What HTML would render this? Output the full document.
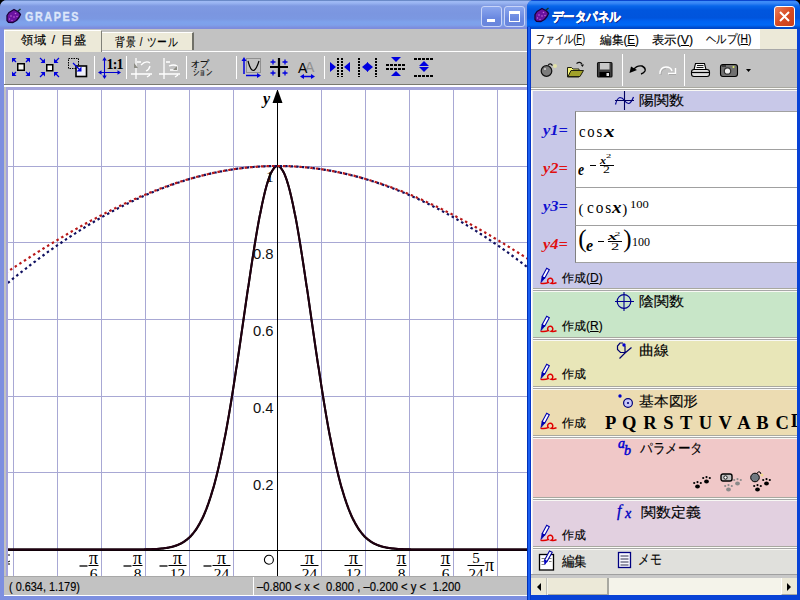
<!DOCTYPE html>
<html><head><meta charset="utf-8">
<style>
*{box-sizing:border-box}
body{margin:0;width:800px;height:600px;position:relative;overflow:hidden;background:#000;font-family:"Liberation Sans",sans-serif;font-size:12px;color:#000}
.a{position:absolute}
.sep{left:531px;width:266px;height:4px;background:linear-gradient(#a8a8a0 0,#a8a8a0 1px,#fcfcf8 1px,#fcfcf8 2px,#a8a8a8 2px,#a8a8a8 3px,#f8f8f4 3px)}
.pnl{left:531px;width:266px}
.ib{width:21px;height:21px;border:1px solid #c8d4f8;border-radius:3px;background:linear-gradient(#8aa6ee,#6a88e0 60%,#6a86dc)}
.box{left:575px;width:222px;height:38px;background:#fff;border-top:1px solid #a0a0a0;border-left:1px solid #808080}
.sf{font-family:"Liberation Serif",serif}
.jb{-webkit-text-stroke:0.15px #000}
</style></head><body>

<div class="a" style="left:0;top:0;width:560px;height:600px;background:#7d8fe0;border-radius:7px 7px 0 0"></div>
<div class="a" style="left:0;top:0;width:560px;height:29px;border-radius:7px 7px 0 0;background:linear-gradient(#6a8ac8 0,#6a8ac8 1px,#a0baf4 1px,#9ab5f2 3px,#7f9ae2 6px,#7b96e0 14px,#7b98e2 19px,#7ea2ec 22px,#7ea0ea 25px,#7d8cdc 28px)"></div>
<svg class="a" style="left:0;top:0" width="30" height="30" viewBox="0 0 30 30">
<path d="M14 9.5L18.5 12L20.5 14.5L19 17.5L16.5 20.5L13 22.5L8.5 22.3L7 20.5L7 15.5L9 12.5Z" fill="#6a12a0" stroke="#1a0038" stroke-width="1.3" stroke-linejoin="round"/>
<path d="M17.5 11.5L20.5 9" stroke="#103828" stroke-width="1.4"/>
<g fill="#c468d8"><circle cx="15.5" cy="13.5" r="0.8"/><circle cx="11" cy="16" r="0.8"/><circle cx="14" cy="17" r="0.8"/><circle cx="9.5" cy="19" r="0.7"/><circle cx="12" cy="20.5" r="0.7"/><circle cx="17" cy="16.5" r="0.7"/></g></svg>
<div id="tGRAPES" class="a" style="left:25.03px;top:9.00px;font-size:13px;white-space:nowrap;transform:scaleX(0.8228);transform-origin:0 0;font-weight:bold;color:#dce6fa;letter-spacing:2px;-webkit-text-stroke:0.4px #dce6fa">GRAPES</div>
<div class="a ib" style="left:481px;top:6px"><div class="a" style="left:5px;top:12px;width:8px;height:3px;background:#fff"></div></div>
<div class="a ib" style="left:504px;top:6px"><div class="a" style="left:4px;top:4px;width:11px;height:11px;border:1px solid #fff;border-top-width:3px"></div></div>
<div class="a" style="left:4px;top:29px;width:560px;height:567px;background:#c2c2c2"></div>
<div class="a" style="left:4px;top:51px;width:560px;height:1px;background:#fff"></div>
<div class="a" style="left:4px;top:30px;width:98px;height:22px;background:#ece9d8;border-top:1px solid #fff;border-left:1px solid #fff;border-right:1px solid #808078"></div>
<div class="a" style="left:102px;top:32px;width:92px;height:18px;background:#ece9d8;border-top:1px solid #fff;border-right:2px solid #707068"></div>
<div id="tTab1" class="a jb" style="left:21.00px;top:32.00px;font-size:12px;white-space:nowrap;transform:scaleX(1.0170);transform-origin:0 0;letter-spacing:1px">領域 / 目盛</div>
<div id="tTab2" class="a jb" style="left:115.18px;top:34.00px;font-size:12px;white-space:nowrap;transform:scaleX(0.8158);transform-origin:0 0;letter-spacing:1px">背景 / ツール</div>
<div class="a" style="left:4px;top:84px;width:560px;height:1px;background:#7a7a70"></div>
<div class="a" style="left:4px;top:85px;width:560px;height:2px;background:#fff"></div>
<div class="a" style="left:4px;top:52px;width:1px;height:32px;background:#fff"></div>
<svg class="a" style="left:0;top:52px" width="527" height="32" viewBox="0 52 527 32">
<defs>
<marker id="ah" viewBox="0 0 6 6" refX="5" refY="3" markerWidth="4" markerHeight="4" orient="auto"><path d="M0 0L6 3L0 6Z" fill="#0000e0"/></marker>
</defs>
<!-- icon1 expand -->
<rect x="17.75" y="63.75" width="6.5" height="6.5" fill="#f4f4f0" stroke="#000" stroke-width="1.5"/>
<g fill="#0000e0">
<path d="M12 58h4.5l-4.5 4.5z"/><path d="M30 58h-4.5l4.5 4.5z"/>
<path d="M12 76h4.5l-4.5-4.5z"/><path d="M30 76h-4.5l4.5-4.5z"/>
</g>
<path d="M13 59L16 62M29 59L26 62M13 75L16 72M29 75L26 72" stroke="#0000e0" stroke-width="1.4"/>
<!-- icon2 shrink -->
<rect x="46.75" y="64.75" width="6" height="6" fill="#f4f4f0" stroke="#000" stroke-width="1.5"/>
<g fill="#0000e0">
<path d="M45 63h-4.5l4.5-4.5z"/><path d="M54 63h4.5l-4.5-4.5z"/>
<path d="M45 72h-4.5l4.5 4.5z"/><path d="M54 72h4.5l-4.5 4.5z"/>
</g>
<path d="M40 58L43 61M59 58L56 61M40 77L43 74M59 77L56 74" stroke="#0000e0" stroke-width="1.2"/>
<!-- icon3 -->
<rect x="68.5" y="58.5" width="10" height="10" fill="none" stroke="#000" stroke-width="1" stroke-dasharray="1.5 1"/>
<rect x="76" y="66" width="10.5" height="10.5" fill="#f0f0f8" stroke="#000" stroke-width="1.6"/>
<path d="M73 63L79 69" stroke="#0000e0" stroke-width="1.2"/><path d="M81.5 71.5h-5l5-5z" fill="#0000e0"/>
<!-- sep -->
<rect x="94" y="56" width="1" height="23" fill="#fff"/>
<!-- icon4 1:1 -->
<path d="M104.5 59V77M100 72.5H119" stroke="#0000d0" stroke-width="1.1"/>
<path d="M102.3 60.5L104.5 57L106.7 60.5Z M102.3 75.5L104.5 79L106.7 75.5Z M117.5 70.3L121 72.5L117.5 74.7Z M101.5 70.3L98 72.5L101.5 74.7Z" fill="#0000d0"/>
<text x="106.5" y="68.5" font-family="Liberation Serif" font-weight="bold" font-size="14" letter-spacing="-0.8">1:1</text>
<!-- disabled icons -->
<g stroke="#fff" stroke-width="1.3" fill="none">
<path d="M136 58V79M131 74H152M137 62h4M141 65Q146 60 150 63M150 66Q149 70 146 71M150 75L147 77"/>
<path d="M164 58V79M159 74H180M166 62h4M169 66Q174 64 177 66V70H170M178 75L175 77"/>
</g>
<path d="M134 63v5h4z" fill="#8c8c84"/><path d="M177 66v4h-4z" fill="#8c8c84"/>
<rect x="126" y="56" width="1" height="23" fill="#fff"/>
<rect x="186" y="56" width="1" height="23" fill="#fff"/>
<rect x="236" y="56" width="1" height="23" fill="#fff"/>
<!-- icon11 parabola -->
<rect x="246.5" y="58.5" width="14" height="14" fill="none" stroke="#909090"/>
<path d="M248 61Q253 80 259 61" fill="none" stroke="#000" stroke-width="1.2"/>
<path d="M244 74V60" stroke="#0000e0" stroke-width="1.5"/><path d="M241.5 61L244 57L246.5 61Z" fill="#0000e0"/>
<path d="M246 75.5H258" stroke="#0000e0" stroke-width="1.5"/><path d="M257 73L261 75.5L257 78Z" fill="#0000e0"/>
<!-- icon12 grid -->
<path d="M279 58V77M270 67H288" stroke="#000" stroke-width="2.2"/>
<g stroke="#0000e0" stroke-width="1.3"><path d="M270.5 62h5M273 59.5v5M282.5 62h5M285 59.5v5M270.5 73h5M273 70.5v5M282.5 73h5M285 70.5v5"/></g>
<!-- icon13 A -->
<text x="305" y="72" font-family="Liberation Sans" font-size="14" fill="#909090">A</text>
<text x="298" y="73" font-family="Liberation Sans" font-size="14" fill="#000">A</text>
<path d="M303 76.5H312" stroke="#0000e0" stroke-width="1.5"/><path d="M304 74L300 76.5L304 79ZM311 74L315 76.5L311 79Z" fill="#0000e0"/>
<rect x="324" y="56" width="1" height="23" fill="#fff"/>
<!-- icon15 -->
<g fill="#0000e0"><path d="M330 62L336 67L330 72Z"/><path d="M350 62L344 67L350 72Z"/>
<path d="M368 62L362 67L368 72Z"/><path d="M367 62L373 67L367 72Z"/>
<path d="M391 57L401 57L396 62Z"/><path d="M391 76L401 76L396 71Z"/>
<path d="M419 66L429 66L424 61Z"/><path d="M419 67L429 67L424 72Z"/></g>
<g stroke="#000" stroke-width="2" stroke-dasharray="2 1"><path d="M338 58V77M342 58V77M359 58V77M376 58V77"/></g>
<g stroke="#000" stroke-width="2" stroke-dasharray="3 1"><path d="M386 65H406M386 69H406M414 59H434M414 76H434"/></g>
</svg>

<div id="tOp1" class="a jb" style="left:191.00px;top:58.00px;font-size:9px;white-space:nowrap;transform:scaleX(1.0000);transform-origin:0 0;">オプ</div>
<div id="tOp2" class="a jb" style="left:193.28px;top:66.00px;font-size:9px;white-space:nowrap;transform:scaleX(0.7200);transform-origin:0 0;">ション</div>
<div class="a" style="left:6px;top:87px;width:560px;height:489px;background:#fff;border-left:2px solid #a4a4dc;border-top:3px solid #a4a4dc"></div>
<svg class="a" style="left:0;top:0" width="560" height="600">
<defs><clipPath id="gc"><rect x="8" y="90" width="560" height="486"/></clipPath></defs>
<g clip-path="url(#gc)">
<g stroke="#a8a8d4" stroke-width="1"><line x1="13.5" y1="86" x2="13.5" y2="600"/><line x1="57.5" y1="86" x2="57.5" y2="600"/><line x1="101.5" y1="86" x2="101.5" y2="600"/><line x1="145.5" y1="86" x2="145.5" y2="600"/><line x1="189.5" y1="86" x2="189.5" y2="600"/><line x1="233.5" y1="86" x2="233.5" y2="600"/><line x1="321.5" y1="86" x2="321.5" y2="600"/><line x1="365.5" y1="86" x2="365.5" y2="600"/><line x1="409.5" y1="86" x2="409.5" y2="600"/><line x1="453.5" y1="86" x2="453.5" y2="600"/><line x1="497.5" y1="86" x2="497.5" y2="600"/><line x1="541.5" y1="86" x2="541.5" y2="600"/><line x1="0" y1="472.5" x2="560" y2="472.5"/><line x1="0" y1="396.5" x2="560" y2="396.5"/><line x1="0" y1="319.5" x2="560" y2="319.5"/><line x1="0" y1="242.5" x2="560" y2="242.5"/><line x1="0" y1="166.5" x2="560" y2="166.5"/><line x1="0" y1="89.5" x2="560" y2="89.5"/></g>
<path d="M277.5 90V600M0 550.5H560" stroke="#000" stroke-width="1"/>
<path d="M-4.9,549.5 L-4.5,549.5 L-4.1,549.5 L-3.7,549.5 L-3.3,549.5 L-2.9,549.5 L-2.5,549.5 L-2.1,549.5 L-1.7,549.5 L-1.3,549.5 L-0.9,549.5 L-0.5,549.5 L-0.1,549.5 L0.3,549.5 L0.7,549.5 L1.1,549.5 L1.5,549.5 L2.0,549.5 L2.4,549.5 L2.8,549.5 L3.2,549.5 L3.6,549.5 L4.0,549.5 L4.4,549.5 L4.8,549.5 L5.2,549.5 L5.6,549.5 L6.0,549.5 L6.4,549.5 L6.8,549.5 L7.2,549.5 L7.6,549.5 L8.0,549.5 L8.4,549.5 L8.8,549.5 L9.2,549.5 L9.6,549.5 L10.0,549.5 L10.4,549.5 L10.8,549.5 L11.2,549.5 L11.6,549.5 L12.0,549.5 L12.4,549.5 L12.8,549.5 L13.2,549.5 L13.7,549.5 L14.1,549.5 L14.5,549.5 L14.9,549.5 L15.3,549.5 L15.7,549.5 L16.1,549.5 L16.5,549.5 L16.9,549.5 L17.3,549.5 L17.7,549.5 L18.1,549.5 L18.5,549.5 L18.9,549.5 L19.3,549.5 L19.7,549.5 L20.1,549.5 L20.5,549.5 L20.9,549.5 L21.3,549.5 L21.7,549.5 L22.1,549.5 L22.5,549.5 L22.9,549.5 L23.3,549.5 L23.7,549.5 L24.1,549.5 L24.5,549.5 L24.9,549.5 L25.4,549.5 L25.8,549.5 L26.2,549.5 L26.6,549.5 L27.0,549.5 L27.4,549.5 L27.8,549.5 L28.2,549.5 L28.6,549.5 L29.0,549.5 L29.4,549.5 L29.8,549.5 L30.2,549.5 L30.6,549.5 L31.0,549.5 L31.4,549.5 L31.8,549.5 L32.2,549.5 L32.6,549.5 L33.0,549.5 L33.4,549.5 L33.8,549.5 L34.2,549.5 L34.6,549.5 L35.0,549.5 L35.4,549.5 L35.8,549.5 L36.2,549.5 L36.6,549.5 L37.0,549.5 L37.5,549.5 L37.9,549.5 L38.3,549.5 L38.7,549.5 L39.1,549.5 L39.5,549.5 L39.9,549.5 L40.3,549.5 L40.7,549.5 L41.1,549.5 L41.5,549.5 L41.9,549.5 L42.3,549.5 L42.7,549.5 L43.1,549.5 L43.5,549.5 L43.9,549.5 L44.3,549.5 L44.7,549.5 L45.1,549.5 L45.5,549.5 L45.9,549.5 L46.3,549.5 L46.7,549.5 L47.1,549.5 L47.5,549.5 L47.9,549.5 L48.3,549.5 L48.7,549.5 L49.2,549.5 L49.6,549.5 L50.0,549.5 L50.4,549.5 L50.8,549.5 L51.2,549.5 L51.6,549.5 L52.0,549.5 L52.4,549.5 L52.8,549.5 L53.2,549.5 L53.6,549.5 L54.0,549.5 L54.4,549.5 L54.8,549.5 L55.2,549.5 L55.6,549.5 L56.0,549.5 L56.4,549.5 L56.8,549.5 L57.2,549.5 L57.6,549.5 L58.0,549.5 L58.4,549.5 L58.8,549.5 L59.2,549.5 L59.6,549.5 L60.0,549.5 L60.4,549.5 L60.9,549.5 L61.3,549.5 L61.7,549.5 L62.1,549.5 L62.5,549.5 L62.9,549.5 L63.3,549.5 L63.7,549.5 L64.1,549.5 L64.5,549.5 L64.9,549.5 L65.3,549.5 L65.7,549.5 L66.1,549.5 L66.5,549.5 L66.9,549.5 L67.3,549.5 L67.7,549.5 L68.1,549.5 L68.5,549.5 L68.9,549.5 L69.3,549.5 L69.7,549.5 L70.1,549.5 L70.5,549.5 L70.9,549.5 L71.3,549.5 L71.7,549.5 L72.1,549.5 L72.6,549.5 L73.0,549.5 L73.4,549.5 L73.8,549.5 L74.2,549.5 L74.6,549.5 L75.0,549.5 L75.4,549.5 L75.8,549.5 L76.2,549.5 L76.6,549.5 L77.0,549.5 L77.4,549.5 L77.8,549.5 L78.2,549.5 L78.6,549.5 L79.0,549.5 L79.4,549.5 L79.8,549.5 L80.2,549.5 L80.6,549.5 L81.0,549.5 L81.4,549.5 L81.8,549.5 L82.2,549.5 L82.6,549.5 L83.0,549.5 L83.4,549.5 L83.8,549.5 L84.3,549.5 L84.7,549.5 L85.1,549.5 L85.5,549.5 L85.9,549.5 L86.3,549.5 L86.7,549.5 L87.1,549.5 L87.5,549.5 L87.9,549.5 L88.3,549.5 L88.7,549.5 L89.1,549.5 L89.5,549.5 L89.9,549.5 L90.3,549.5 L90.7,549.5 L91.1,549.5 L91.5,549.5 L91.9,549.5 L92.3,549.5 L92.7,549.5 L93.1,549.5 L93.5,549.5 L93.9,549.5 L94.3,549.5 L94.7,549.5 L95.1,549.5 L95.5,549.5 L96.0,549.5 L96.4,549.5 L96.8,549.5 L97.2,549.5 L97.6,549.5 L98.0,549.5 L98.4,549.5 L98.8,549.5 L99.2,549.5 L99.6,549.5 L100.0,549.5 L100.4,549.5 L100.8,549.5 L101.2,549.5 L101.6,549.5 L102.0,549.5 L102.4,549.5 L102.8,549.5 L103.2,549.5 L103.6,549.5 L104.0,549.5 L104.4,549.5 L104.8,549.5 L105.2,549.5 L105.6,549.5 L106.0,549.5 L106.4,549.5 L106.8,549.5 L107.2,549.5 L107.7,549.5 L108.1,549.5 L108.5,549.5 L108.9,549.5 L109.3,549.5 L109.7,549.5 L110.1,549.5 L110.5,549.5 L110.9,549.5 L111.3,549.5 L111.7,549.5 L112.1,549.5 L112.5,549.5 L112.9,549.5 L113.3,549.5 L113.7,549.5 L114.1,549.5 L114.5,549.5 L114.9,549.5 L115.3,549.5 L115.7,549.5 L116.1,549.5 L116.5,549.5 L116.9,549.5 L117.3,549.5 L117.7,549.5 L118.1,549.5 L118.5,549.5 L118.9,549.5 L119.4,549.5 L119.8,549.5 L120.2,549.5 L120.6,549.5 L121.0,549.5 L121.4,549.5 L121.8,549.5 L122.2,549.5 L122.6,549.5 L123.0,549.5 L123.4,549.5 L123.8,549.5 L124.2,549.5 L124.6,549.5 L125.0,549.5 L125.4,549.5 L125.8,549.5 L126.2,549.5 L126.6,549.5 L127.0,549.5 L127.4,549.5 L127.8,549.5 L128.2,549.5 L128.6,549.5 L129.0,549.5 L129.4,549.5 L129.8,549.5 L130.2,549.5 L130.6,549.5 L131.1,549.5 L131.5,549.5 L131.9,549.5 L132.3,549.5 L132.7,549.5 L133.1,549.5 L133.5,549.5 L133.9,549.5 L134.3,549.5 L134.7,549.5 L135.1,549.5 L135.5,549.5 L135.9,549.5 L136.3,549.5 L136.7,549.5 L137.1,549.5 L137.5,549.4 L137.9,549.4 L138.3,549.4 L138.7,549.4 L139.1,549.4 L139.5,549.4 L139.9,549.4 L140.3,549.4 L140.7,549.4 L141.1,549.4 L141.5,549.4 L141.9,549.4 L142.3,549.4 L142.8,549.4 L143.2,549.4 L143.6,549.4 L144.0,549.4 L144.4,549.4 L144.8,549.4 L145.2,549.4 L145.6,549.4 L146.0,549.4 L146.4,549.3 L146.8,549.3 L147.2,549.3 L147.6,549.3 L148.0,549.3 L148.4,549.3 L148.8,549.3 L149.2,549.3 L149.6,549.3 L150.0,549.3 L150.4,549.2 L150.8,549.2 L151.2,549.2 L151.6,549.2 L152.0,549.2 L152.4,549.2 L152.8,549.2 L153.2,549.1 L153.6,549.1 L154.0,549.1 L154.5,549.1 L154.9,549.1 L155.3,549.1 L155.7,549.0 L156.1,549.0 L156.5,549.0 L156.9,549.0 L157.3,548.9 L157.7,548.9 L158.1,548.9 L158.5,548.9 L158.9,548.8 L159.3,548.8 L159.7,548.8 L160.1,548.7 L160.5,548.7 L160.9,548.7 L161.3,548.6 L161.7,548.6 L162.1,548.6 L162.5,548.5 L162.9,548.5 L163.3,548.4 L163.7,548.4 L164.1,548.3 L164.5,548.3 L164.9,548.2 L165.3,548.2 L165.7,548.1 L166.2,548.1 L166.6,548.0 L167.0,547.9 L167.4,547.9 L167.8,547.8 L168.2,547.7 L168.6,547.7 L169.0,547.6 L169.4,547.5 L169.8,547.4 L170.2,547.3 L170.6,547.3 L171.0,547.2 L171.4,547.1 L171.8,547.0 L172.2,546.9 L172.6,546.8 L173.0,546.7 L173.4,546.6 L173.8,546.4 L174.2,546.3 L174.6,546.2 L175.0,546.1 L175.4,545.9 L175.8,545.8 L176.2,545.7 L176.6,545.5 L177.0,545.4 L177.4,545.2 L177.9,545.1 L178.3,544.9 L178.7,544.7 L179.1,544.5 L179.5,544.4 L179.9,544.2 L180.3,544.0 L180.7,543.8 L181.1,543.6 L181.5,543.4 L181.9,543.1 L182.3,542.9 L182.7,542.7 L183.1,542.4 L183.5,542.2 L183.9,541.9 L184.3,541.7 L184.7,541.4 L185.1,541.1 L185.5,540.8 L185.9,540.5 L186.3,540.2 L186.7,539.9 L187.1,539.6 L187.5,539.3 L187.9,538.9 L188.3,538.6 L188.7,538.2 L189.1,537.8 L189.6,537.5 L190.0,537.1 L190.4,536.7 L190.8,536.3 L191.2,535.8 L191.6,535.4 L192.0,534.9 L192.4,534.5 L192.8,534.0 L193.2,533.5 L193.6,533.0 L194.0,532.5 L194.4,532.0 L194.8,531.5 L195.2,530.9 L195.6,530.3 L196.0,529.8 L196.4,529.2 L196.8,528.6 L197.2,527.9 L197.6,527.3 L198.0,526.7 L198.4,526.0 L198.8,525.3 L199.2,524.6 L199.6,523.9 L200.0,523.2 L200.4,522.4 L200.8,521.6 L201.2,520.9 L201.7,520.1 L202.1,519.2 L202.5,518.4 L202.9,517.5 L203.3,516.7 L203.7,515.8 L204.1,514.9 L204.5,513.9 L204.9,513.0 L205.3,512.0 L205.7,511.0 L206.1,510.0 L206.5,509.0 L206.9,507.9 L207.3,506.8 L207.7,505.7 L208.1,504.6 L208.5,503.5 L208.9,502.3 L209.3,501.1 L209.7,499.9 L210.1,498.7 L210.5,497.5 L210.9,496.2 L211.3,494.9 L211.7,493.6 L212.1,492.2 L212.5,490.9 L212.9,489.5 L213.4,488.1 L213.8,486.6 L214.2,485.2 L214.6,483.7 L215.0,482.2 L215.4,480.6 L215.8,479.1 L216.2,477.5 L216.6,475.9 L217.0,474.3 L217.4,472.6 L217.8,470.9 L218.2,469.2 L218.6,467.5 L219.0,465.7 L219.4,464.0 L219.8,462.2 L220.2,460.3 L220.6,458.5 L221.0,456.6 L221.4,454.7 L221.8,452.8 L222.2,450.8 L222.6,448.8 L223.0,446.8 L223.4,444.8 L223.8,442.8 L224.2,440.7 L224.6,438.6 L225.1,436.5 L225.5,434.3 L225.9,432.2 L226.3,430.0 L226.7,427.8 L227.1,425.5 L227.5,423.3 L227.9,421.0 L228.3,418.7 L228.7,416.4 L229.1,414.0 L229.5,411.6 L229.9,409.2 L230.3,406.8 L230.7,404.4 L231.1,402.0 L231.5,399.5 L231.9,397.0 L232.3,394.5 L232.7,392.0 L233.1,389.4 L233.5,386.9 L233.9,384.3 L234.3,381.7 L234.7,379.1 L235.1,376.5 L235.5,373.8 L235.9,371.2 L236.3,368.5 L236.8,365.8 L237.2,363.2 L237.6,360.5 L238.0,357.7 L238.4,355.0 L238.8,352.3 L239.2,349.5 L239.6,346.8 L240.0,344.0 L240.4,341.3 L240.8,338.5 L241.2,335.7 L241.6,332.9 L242.0,330.1 L242.4,327.3 L242.8,324.5 L243.2,321.8 L243.6,319.0 L244.0,316.2 L244.4,313.4 L244.8,310.6 L245.2,307.8 L245.6,305.0 L246.0,302.2 L246.4,299.4 L246.8,296.6 L247.2,293.9 L247.6,291.1 L248.0,288.3 L248.5,285.6 L248.9,282.8 L249.3,280.1 L249.7,277.4 L250.1,274.7 L250.5,272.0 L250.9,269.3 L251.3,266.7 L251.7,264.0 L252.1,261.4 L252.5,258.8 L252.9,256.2 L253.3,253.6 L253.7,251.1 L254.1,248.6 L254.5,246.0 L254.9,243.6 L255.3,241.1 L255.7,238.7 L256.1,236.3 L256.5,233.9 L256.9,231.5 L257.3,229.2 L257.7,226.9 L258.1,224.7 L258.5,222.4 L258.9,220.2 L259.3,218.1 L259.7,215.9 L260.2,213.8 L260.6,211.8 L261.0,209.7 L261.4,207.7 L261.8,205.8 L262.2,203.9 L262.6,202.0 L263.0,200.2 L263.4,198.4 L263.8,196.6 L264.2,194.9 L264.6,193.3 L265.0,191.6 L265.4,190.1 L265.8,188.5 L266.2,187.1 L266.6,185.6 L267.0,184.2 L267.4,182.9 L267.8,181.6 L268.2,180.3 L268.6,179.1 L269.0,178.0 L269.4,176.9 L269.8,175.8 L270.2,174.8 L270.6,173.9 L271.0,173.0 L271.4,172.2 L271.9,171.4 L272.3,170.6 L272.7,170.0 L273.1,169.3 L273.5,168.8 L273.9,168.2 L274.3,167.8 L274.7,167.4 L275.1,167.0 L275.5,166.7 L275.9,166.4 L276.3,166.2 L276.7,166.1 L277.1,166.0 L277.5,166.0 L277.9,166.0 L278.3,166.1 L278.7,166.2 L279.1,166.4 L279.5,166.7 L279.9,167.0 L280.3,167.4 L280.7,167.8 L281.1,168.2 L281.5,168.8 L281.9,169.3 L282.3,170.0 L282.7,170.6 L283.1,171.4 L283.6,172.2 L284.0,173.0 L284.4,173.9 L284.8,174.8 L285.2,175.8 L285.6,176.9 L286.0,178.0 L286.4,179.1 L286.8,180.3 L287.2,181.6 L287.6,182.9 L288.0,184.2 L288.4,185.6 L288.8,187.1 L289.2,188.5 L289.6,190.1 L290.0,191.6 L290.4,193.3 L290.8,194.9 L291.2,196.6 L291.6,198.4 L292.0,200.2 L292.4,202.0 L292.8,203.9 L293.2,205.8 L293.6,207.7 L294.0,209.7 L294.4,211.8 L294.8,213.8 L295.3,215.9 L295.7,218.1 L296.1,220.2 L296.5,222.4 L296.9,224.7 L297.3,226.9 L297.7,229.2 L298.1,231.5 L298.5,233.9 L298.9,236.3 L299.3,238.7 L299.7,241.1 L300.1,243.6 L300.5,246.0 L300.9,248.6 L301.3,251.1 L301.7,253.6 L302.1,256.2 L302.5,258.8 L302.9,261.4 L303.3,264.0 L303.7,266.7 L304.1,269.3 L304.5,272.0 L304.9,274.7 L305.3,277.4 L305.7,280.1 L306.1,282.8 L306.5,285.6 L307.0,288.3 L307.4,291.1 L307.8,293.9 L308.2,296.6 L308.6,299.4 L309.0,302.2 L309.4,305.0 L309.8,307.8 L310.2,310.6 L310.6,313.4 L311.0,316.2 L311.4,319.0 L311.8,321.8 L312.2,324.5 L312.6,327.3 L313.0,330.1 L313.4,332.9 L313.8,335.7 L314.2,338.5 L314.6,341.3 L315.0,344.0 L315.4,346.8 L315.8,349.5 L316.2,352.3 L316.6,355.0 L317.0,357.7 L317.4,360.5 L317.8,363.2 L318.2,365.8 L318.7,368.5 L319.1,371.2 L319.5,373.8 L319.9,376.5 L320.3,379.1 L320.7,381.7 L321.1,384.3 L321.5,386.9 L321.9,389.4 L322.3,392.0 L322.7,394.5 L323.1,397.0 L323.5,399.5 L323.9,402.0 L324.3,404.4 L324.7,406.8 L325.1,409.2 L325.5,411.6 L325.9,414.0 L326.3,416.4 L326.7,418.7 L327.1,421.0 L327.5,423.3 L327.9,425.5 L328.3,427.8 L328.7,430.0 L329.1,432.2 L329.5,434.3 L329.9,436.5 L330.4,438.6 L330.8,440.7 L331.2,442.8 L331.6,444.8 L332.0,446.8 L332.4,448.8 L332.8,450.8 L333.2,452.8 L333.6,454.7 L334.0,456.6 L334.4,458.5 L334.8,460.3 L335.2,462.2 L335.6,464.0 L336.0,465.7 L336.4,467.5 L336.8,469.2 L337.2,470.9 L337.6,472.6 L338.0,474.3 L338.4,475.9 L338.8,477.5 L339.2,479.1 L339.6,480.6 L340.0,482.2 L340.4,483.7 L340.8,485.2 L341.2,486.6 L341.6,488.1 L342.1,489.5 L342.5,490.9 L342.9,492.2 L343.3,493.6 L343.7,494.9 L344.1,496.2 L344.5,497.5 L344.9,498.7 L345.3,499.9 L345.7,501.1 L346.1,502.3 L346.5,503.5 L346.9,504.6 L347.3,505.7 L347.7,506.8 L348.1,507.9 L348.5,509.0 L348.9,510.0 L349.3,511.0 L349.7,512.0 L350.1,513.0 L350.5,513.9 L350.9,514.9 L351.3,515.8 L351.7,516.7 L352.1,517.5 L352.5,518.4 L352.9,519.2 L353.3,520.1 L353.8,520.9 L354.2,521.6 L354.6,522.4 L355.0,523.2 L355.4,523.9 L355.8,524.6 L356.2,525.3 L356.6,526.0 L357.0,526.7 L357.4,527.3 L357.8,527.9 L358.2,528.6 L358.6,529.2 L359.0,529.8 L359.4,530.3 L359.8,530.9 L360.2,531.5 L360.6,532.0 L361.0,532.5 L361.4,533.0 L361.8,533.5 L362.2,534.0 L362.6,534.5 L363.0,534.9 L363.4,535.4 L363.8,535.8 L364.2,536.3 L364.6,536.7 L365.0,537.1 L365.4,537.5 L365.9,537.8 L366.3,538.2 L366.7,538.6 L367.1,538.9 L367.5,539.3 L367.9,539.6 L368.3,539.9 L368.7,540.2 L369.1,540.5 L369.5,540.8 L369.9,541.1 L370.3,541.4 L370.7,541.7 L371.1,541.9 L371.5,542.2 L371.9,542.4 L372.3,542.7 L372.7,542.9 L373.1,543.1 L373.5,543.4 L373.9,543.6 L374.3,543.8 L374.7,544.0 L375.1,544.2 L375.5,544.4 L375.9,544.5 L376.3,544.7 L376.7,544.9 L377.1,545.1 L377.6,545.2 L378.0,545.4 L378.4,545.5 L378.8,545.7 L379.2,545.8 L379.6,545.9 L380.0,546.1 L380.4,546.2 L380.8,546.3 L381.2,546.4 L381.6,546.6 L382.0,546.7 L382.4,546.8 L382.8,546.9 L383.2,547.0 L383.6,547.1 L384.0,547.2 L384.4,547.3 L384.8,547.3 L385.2,547.4 L385.6,547.5 L386.0,547.6 L386.4,547.7 L386.8,547.7 L387.2,547.8 L387.6,547.9 L388.0,547.9 L388.4,548.0 L388.8,548.1 L389.3,548.1 L389.7,548.2 L390.1,548.2 L390.5,548.3 L390.9,548.3 L391.3,548.4 L391.7,548.4 L392.1,548.5 L392.5,548.5 L392.9,548.6 L393.3,548.6 L393.7,548.6 L394.1,548.7 L394.5,548.7 L394.9,548.7 L395.3,548.8 L395.7,548.8 L396.1,548.8 L396.5,548.9 L396.9,548.9 L397.3,548.9 L397.7,548.9 L398.1,549.0 L398.5,549.0 L398.9,549.0 L399.3,549.0 L399.7,549.1 L400.1,549.1 L400.5,549.1 L401.0,549.1 L401.4,549.1 L401.8,549.1 L402.2,549.2 L402.6,549.2 L403.0,549.2 L403.4,549.2 L403.8,549.2 L404.2,549.2 L404.6,549.2 L405.0,549.3 L405.4,549.3 L405.8,549.3 L406.2,549.3 L406.6,549.3 L407.0,549.3 L407.4,549.3 L407.8,549.3 L408.2,549.3 L408.6,549.3 L409.0,549.4 L409.4,549.4 L409.8,549.4 L410.2,549.4 L410.6,549.4 L411.0,549.4 L411.4,549.4 L411.8,549.4 L412.2,549.4 L412.7,549.4 L413.1,549.4 L413.5,549.4 L413.9,549.4 L414.3,549.4 L414.7,549.4 L415.1,549.4 L415.5,549.4 L415.9,549.4 L416.3,549.4 L416.7,549.4 L417.1,549.4 L417.5,549.4 L417.9,549.5 L418.3,549.5 L418.7,549.5 L419.1,549.5 L419.5,549.5 L419.9,549.5 L420.3,549.5 L420.7,549.5 L421.1,549.5 L421.5,549.5 L421.9,549.5 L422.3,549.5 L422.7,549.5 L423.1,549.5 L423.5,549.5 L423.9,549.5 L424.4,549.5 L424.8,549.5 L425.2,549.5 L425.6,549.5 L426.0,549.5 L426.4,549.5 L426.8,549.5 L427.2,549.5 L427.6,549.5 L428.0,549.5 L428.4,549.5 L428.8,549.5 L429.2,549.5 L429.6,549.5 L430.0,549.5 L430.4,549.5 L430.8,549.5 L431.2,549.5 L431.6,549.5 L432.0,549.5 L432.4,549.5 L432.8,549.5 L433.2,549.5 L433.6,549.5 L434.0,549.5 L434.4,549.5 L434.8,549.5 L435.2,549.5 L435.6,549.5 L436.1,549.5 L436.5,549.5 L436.9,549.5 L437.3,549.5 L437.7,549.5 L438.1,549.5 L438.5,549.5 L438.9,549.5 L439.3,549.5 L439.7,549.5 L440.1,549.5 L440.5,549.5 L440.9,549.5 L441.3,549.5 L441.7,549.5 L442.1,549.5 L442.5,549.5 L442.9,549.5 L443.3,549.5 L443.7,549.5 L444.1,549.5 L444.5,549.5 L444.9,549.5 L445.3,549.5 L445.7,549.5 L446.1,549.5 L446.5,549.5 L446.9,549.5 L447.3,549.5 L447.8,549.5 L448.2,549.5 L448.6,549.5 L449.0,549.5 L449.4,549.5 L449.8,549.5 L450.2,549.5 L450.6,549.5 L451.0,549.5 L451.4,549.5 L451.8,549.5 L452.2,549.5 L452.6,549.5 L453.0,549.5 L453.4,549.5 L453.8,549.5 L454.2,549.5 L454.6,549.5 L455.0,549.5 L455.4,549.5 L455.8,549.5 L456.2,549.5 L456.6,549.5 L457.0,549.5 L457.4,549.5 L457.8,549.5 L458.2,549.5 L458.6,549.5 L459.0,549.5 L459.5,549.5 L459.9,549.5 L460.3,549.5 L460.7,549.5 L461.1,549.5 L461.5,549.5 L461.9,549.5 L462.3,549.5 L462.7,549.5 L463.1,549.5 L463.5,549.5 L463.9,549.5 L464.3,549.5 L464.7,549.5 L465.1,549.5 L465.5,549.5 L465.9,549.5 L466.3,549.5 L466.7,549.5 L467.1,549.5 L467.5,549.5 L467.9,549.5 L468.3,549.5 L468.7,549.5 L469.1,549.5 L469.5,549.5 L469.9,549.5 L470.3,549.5 L470.7,549.5 L471.2,549.5 L471.6,549.5 L472.0,549.5 L472.4,549.5 L472.8,549.5 L473.2,549.5 L473.6,549.5 L474.0,549.5 L474.4,549.5 L474.8,549.5 L475.2,549.5 L475.6,549.5 L476.0,549.5 L476.4,549.5 L476.8,549.5 L477.2,549.5 L477.6,549.5 L478.0,549.5 L478.4,549.5 L478.8,549.5 L479.2,549.5 L479.6,549.5 L480.0,549.5 L480.4,549.5 L480.8,549.5 L481.2,549.5 L481.6,549.5 L482.0,549.5 L482.4,549.5 L482.9,549.5 L483.3,549.5 L483.7,549.5 L484.1,549.5 L484.5,549.5 L484.9,549.5 L485.3,549.5 L485.7,549.5 L486.1,549.5 L486.5,549.5 L486.9,549.5 L487.3,549.5 L487.7,549.5 L488.1,549.5 L488.5,549.5 L488.9,549.5 L489.3,549.5 L489.7,549.5 L490.1,549.5 L490.5,549.5 L490.9,549.5 L491.3,549.5 L491.7,549.5 L492.1,549.5 L492.5,549.5 L492.9,549.5 L493.3,549.5 L493.7,549.5 L494.1,549.5 L494.6,549.5 L495.0,549.5 L495.4,549.5 L495.8,549.5 L496.2,549.5 L496.6,549.5 L497.0,549.5 L497.4,549.5 L497.8,549.5 L498.2,549.5 L498.6,549.5 L499.0,549.5 L499.4,549.5 L499.8,549.5 L500.2,549.5 L500.6,549.5 L501.0,549.5 L501.4,549.5 L501.8,549.5 L502.2,549.5 L502.6,549.5 L503.0,549.5 L503.4,549.5 L503.8,549.5 L504.2,549.5 L504.6,549.5 L505.0,549.5 L505.4,549.5 L505.8,549.5 L506.3,549.5 L506.7,549.5 L507.1,549.5 L507.5,549.5 L507.9,549.5 L508.3,549.5 L508.7,549.5 L509.1,549.5 L509.5,549.5 L509.9,549.5 L510.3,549.5 L510.7,549.5 L511.1,549.5 L511.5,549.5 L511.9,549.5 L512.3,549.5 L512.7,549.5 L513.1,549.5 L513.5,549.5 L513.9,549.5 L514.3,549.5 L514.7,549.5 L515.1,549.5 L515.5,549.5 L515.9,549.5 L516.3,549.5 L516.7,549.5 L517.1,549.5 L517.5,549.5 L518.0,549.5 L518.4,549.5 L518.8,549.5 L519.2,549.5 L519.6,549.5 L520.0,549.5 L520.4,549.5 L520.8,549.5 L521.2,549.5 L521.6,549.5 L522.0,549.5 L522.4,549.5 L522.8,549.5 L523.2,549.5 L523.6,549.5 L524.0,549.5 L524.4,549.5 L524.8,549.5 L525.2,549.5 L525.6,549.5 L526.0,549.5 L526.4,549.5 L526.8,549.5 L527.2,549.5 L527.6,549.5 L528.0,549.5 L528.4,549.5 L528.8,549.5 L529.2,549.5 L529.7,549.5 L530.1,549.5 L530.5,549.5 L530.9,549.5 L531.3,549.5 L531.7,549.5 L532.1,549.5 L532.5,549.5 L532.9,549.5 L533.3,549.5 L533.7,549.5 L534.1,549.5 L534.5,549.5 L534.9,549.5 L535.3,549.5 L535.7,549.5 L536.1,549.5 L536.5,549.5 L536.9,549.5 L537.3,549.5 L537.7,549.5 L538.1,549.5 L538.5,549.5 L538.9,549.5 L539.3,549.5 L539.7,549.5 L540.1,549.5 L540.5,549.5 L540.9,549.5 L541.3,549.5 L541.8,549.5 L542.2,549.5 L542.6,549.5 L543.0,549.5 L543.4,549.5 L543.8,549.5 L544.2,549.5 L544.6,549.5 L545.0,549.5 L545.4,549.5 L545.8,549.5 L546.2,549.5 L546.6,549.5 L547.0,549.5 L547.4,549.5 L547.8,549.5 L548.2,549.5 L548.6,549.5 L549.0,549.5 L549.4,549.5 L549.8,549.5 L550.2,549.5 L550.6,549.5 L551.0,549.5 L551.4,549.5 L551.8,549.5 L552.2,549.5 L552.6,549.5 L553.0,549.5 L553.5,549.5 L553.9,549.5 L554.3,549.5 L554.7,549.5 L555.1,549.5 L555.5,549.5 L555.9,549.5 L556.3,549.5 L556.7,549.5 L557.1,549.5 L557.5,549.5 L557.9,549.5 L558.3,549.5 L558.7,549.5 L559.1,549.5 L559.5,549.5 L559.9,549.5" fill="none" stroke="#000" stroke-width="2"/>
<path d="M-4.9,549.5 L-4.5,549.5 L-4.1,549.5 L-3.7,549.5 L-3.3,549.5 L-2.9,549.5 L-2.5,549.5 L-2.1,549.5 L-1.7,549.5 L-1.3,549.5 L-0.9,549.5 L-0.5,549.5 L-0.1,549.5 L0.3,549.5 L0.7,549.5 L1.1,549.5 L1.5,549.5 L2.0,549.5 L2.4,549.5 L2.8,549.5 L3.2,549.5 L3.6,549.5 L4.0,549.5 L4.4,549.5 L4.8,549.5 L5.2,549.5 L5.6,549.5 L6.0,549.5 L6.4,549.5 L6.8,549.5 L7.2,549.5 L7.6,549.5 L8.0,549.5 L8.4,549.5 L8.8,549.5 L9.2,549.5 L9.6,549.5 L10.0,549.5 L10.4,549.5 L10.8,549.5 L11.2,549.5 L11.6,549.5 L12.0,549.5 L12.4,549.5 L12.8,549.5 L13.2,549.5 L13.7,549.5 L14.1,549.5 L14.5,549.5 L14.9,549.5 L15.3,549.5 L15.7,549.5 L16.1,549.5 L16.5,549.5 L16.9,549.5 L17.3,549.5 L17.7,549.5 L18.1,549.5 L18.5,549.5 L18.9,549.5 L19.3,549.5 L19.7,549.5 L20.1,549.5 L20.5,549.5 L20.9,549.5 L21.3,549.5 L21.7,549.5 L22.1,549.5 L22.5,549.5 L22.9,549.5 L23.3,549.5 L23.7,549.5 L24.1,549.5 L24.5,549.5 L24.9,549.5 L25.4,549.5 L25.8,549.5 L26.2,549.5 L26.6,549.5 L27.0,549.5 L27.4,549.5 L27.8,549.5 L28.2,549.5 L28.6,549.5 L29.0,549.5 L29.4,549.5 L29.8,549.5 L30.2,549.5 L30.6,549.5 L31.0,549.5 L31.4,549.5 L31.8,549.5 L32.2,549.5 L32.6,549.5 L33.0,549.5 L33.4,549.5 L33.8,549.5 L34.2,549.5 L34.6,549.5 L35.0,549.5 L35.4,549.5 L35.8,549.5 L36.2,549.5 L36.6,549.5 L37.0,549.5 L37.5,549.5 L37.9,549.5 L38.3,549.5 L38.7,549.5 L39.1,549.5 L39.5,549.5 L39.9,549.5 L40.3,549.5 L40.7,549.5 L41.1,549.5 L41.5,549.5 L41.9,549.5 L42.3,549.5 L42.7,549.5 L43.1,549.5 L43.5,549.5 L43.9,549.5 L44.3,549.5 L44.7,549.5 L45.1,549.5 L45.5,549.5 L45.9,549.5 L46.3,549.5 L46.7,549.5 L47.1,549.5 L47.5,549.5 L47.9,549.5 L48.3,549.5 L48.7,549.5 L49.2,549.5 L49.6,549.5 L50.0,549.5 L50.4,549.5 L50.8,549.5 L51.2,549.5 L51.6,549.5 L52.0,549.5 L52.4,549.5 L52.8,549.5 L53.2,549.5 L53.6,549.5 L54.0,549.5 L54.4,549.5 L54.8,549.5 L55.2,549.5 L55.6,549.5 L56.0,549.5 L56.4,549.5 L56.8,549.5 L57.2,549.5 L57.6,549.5 L58.0,549.5 L58.4,549.5 L58.8,549.5 L59.2,549.5 L59.6,549.5 L60.0,549.5 L60.4,549.5 L60.9,549.5 L61.3,549.5 L61.7,549.5 L62.1,549.5 L62.5,549.5 L62.9,549.5 L63.3,549.5 L63.7,549.5 L64.1,549.5 L64.5,549.5 L64.9,549.5 L65.3,549.5 L65.7,549.5 L66.1,549.5 L66.5,549.5 L66.9,549.5 L67.3,549.5 L67.7,549.5 L68.1,549.5 L68.5,549.5 L68.9,549.5 L69.3,549.5 L69.7,549.5 L70.1,549.5 L70.5,549.5 L70.9,549.5 L71.3,549.5 L71.7,549.5 L72.1,549.5 L72.6,549.5 L73.0,549.5 L73.4,549.5 L73.8,549.5 L74.2,549.5 L74.6,549.5 L75.0,549.5 L75.4,549.5 L75.8,549.5 L76.2,549.5 L76.6,549.5 L77.0,549.5 L77.4,549.5 L77.8,549.5 L78.2,549.5 L78.6,549.5 L79.0,549.5 L79.4,549.5 L79.8,549.5 L80.2,549.5 L80.6,549.5 L81.0,549.5 L81.4,549.5 L81.8,549.5 L82.2,549.5 L82.6,549.5 L83.0,549.5 L83.4,549.5 L83.8,549.5 L84.3,549.5 L84.7,549.5 L85.1,549.5 L85.5,549.5 L85.9,549.5 L86.3,549.5 L86.7,549.5 L87.1,549.5 L87.5,549.5 L87.9,549.5 L88.3,549.5 L88.7,549.5 L89.1,549.5 L89.5,549.5 L89.9,549.5 L90.3,549.5 L90.7,549.5 L91.1,549.5 L91.5,549.5 L91.9,549.5 L92.3,549.5 L92.7,549.5 L93.1,549.5 L93.5,549.5 L93.9,549.5 L94.3,549.5 L94.7,549.5 L95.1,549.5 L95.5,549.5 L96.0,549.5 L96.4,549.5 L96.8,549.5 L97.2,549.5 L97.6,549.5 L98.0,549.5 L98.4,549.5 L98.8,549.5 L99.2,549.5 L99.6,549.5 L100.0,549.5 L100.4,549.5 L100.8,549.5 L101.2,549.5 L101.6,549.5 L102.0,549.5 L102.4,549.5 L102.8,549.5 L103.2,549.5 L103.6,549.5 L104.0,549.5 L104.4,549.5 L104.8,549.5 L105.2,549.5 L105.6,549.5 L106.0,549.5 L106.4,549.5 L106.8,549.5 L107.2,549.5 L107.7,549.5 L108.1,549.5 L108.5,549.5 L108.9,549.5 L109.3,549.5 L109.7,549.5 L110.1,549.5 L110.5,549.5 L110.9,549.5 L111.3,549.5 L111.7,549.5 L112.1,549.5 L112.5,549.5 L112.9,549.5 L113.3,549.5 L113.7,549.5 L114.1,549.5 L114.5,549.5 L114.9,549.5 L115.3,549.5 L115.7,549.5 L116.1,549.5 L116.5,549.5 L116.9,549.5 L117.3,549.5 L117.7,549.5 L118.1,549.5 L118.5,549.5 L118.9,549.5 L119.4,549.5 L119.8,549.5 L120.2,549.5 L120.6,549.5 L121.0,549.5 L121.4,549.5 L121.8,549.5 L122.2,549.5 L122.6,549.5 L123.0,549.5 L123.4,549.5 L123.8,549.5 L124.2,549.5 L124.6,549.5 L125.0,549.5 L125.4,549.5 L125.8,549.5 L126.2,549.5 L126.6,549.5 L127.0,549.5 L127.4,549.5 L127.8,549.5 L128.2,549.5 L128.6,549.5 L129.0,549.5 L129.4,549.5 L129.8,549.5 L130.2,549.5 L130.6,549.5 L131.1,549.5 L131.5,549.5 L131.9,549.5 L132.3,549.5 L132.7,549.5 L133.1,549.5 L133.5,549.5 L133.9,549.5 L134.3,549.5 L134.7,549.5 L135.1,549.5 L135.5,549.4 L135.9,549.4 L136.3,549.4 L136.7,549.4 L137.1,549.4 L137.5,549.4 L137.9,549.4 L138.3,549.4 L138.7,549.4 L139.1,549.4 L139.5,549.4 L139.9,549.4 L140.3,549.4 L140.7,549.4 L141.1,549.4 L141.5,549.4 L141.9,549.4 L142.3,549.4 L142.8,549.4 L143.2,549.4 L143.6,549.4 L144.0,549.4 L144.4,549.3 L144.8,549.3 L145.2,549.3 L145.6,549.3 L146.0,549.3 L146.4,549.3 L146.8,549.3 L147.2,549.3 L147.6,549.3 L148.0,549.3 L148.4,549.3 L148.8,549.2 L149.2,549.2 L149.6,549.2 L150.0,549.2 L150.4,549.2 L150.8,549.2 L151.2,549.2 L151.6,549.2 L152.0,549.1 L152.4,549.1 L152.8,549.1 L153.2,549.1 L153.6,549.1 L154.0,549.0 L154.5,549.0 L154.9,549.0 L155.3,549.0 L155.7,549.0 L156.1,548.9 L156.5,548.9 L156.9,548.9 L157.3,548.9 L157.7,548.8 L158.1,548.8 L158.5,548.8 L158.9,548.7 L159.3,548.7 L159.7,548.7 L160.1,548.6 L160.5,548.6 L160.9,548.6 L161.3,548.5 L161.7,548.5 L162.1,548.4 L162.5,548.4 L162.9,548.3 L163.3,548.3 L163.7,548.2 L164.1,548.2 L164.5,548.1 L164.9,548.1 L165.3,548.0 L165.7,548.0 L166.2,547.9 L166.6,547.8 L167.0,547.8 L167.4,547.7 L167.8,547.6 L168.2,547.6 L168.6,547.5 L169.0,547.4 L169.4,547.3 L169.8,547.2 L170.2,547.1 L170.6,547.1 L171.0,547.0 L171.4,546.9 L171.8,546.8 L172.2,546.7 L172.6,546.5 L173.0,546.4 L173.4,546.3 L173.8,546.2 L174.2,546.1 L174.6,545.9 L175.0,545.8 L175.4,545.7 L175.8,545.5 L176.2,545.4 L176.6,545.2 L177.0,545.1 L177.4,544.9 L177.9,544.8 L178.3,544.6 L178.7,544.4 L179.1,544.2 L179.5,544.0 L179.9,543.8 L180.3,543.6 L180.7,543.4 L181.1,543.2 L181.5,543.0 L181.9,542.8 L182.3,542.5 L182.7,542.3 L183.1,542.1 L183.5,541.8 L183.9,541.5 L184.3,541.3 L184.7,541.0 L185.1,540.7 L185.5,540.4 L185.9,540.1 L186.3,539.8 L186.7,539.5 L187.1,539.2 L187.5,538.8 L187.9,538.5 L188.3,538.1 L188.7,537.7 L189.1,537.4 L189.6,537.0 L190.0,536.6 L190.4,536.2 L190.8,535.7 L191.2,535.3 L191.6,534.9 L192.0,534.4 L192.4,534.0 L192.8,533.5 L193.2,533.0 L193.6,532.5 L194.0,532.0 L194.4,531.4 L194.8,530.9 L195.2,530.3 L195.6,529.8 L196.0,529.2 L196.4,528.6 L196.8,528.0 L197.2,527.3 L197.6,526.7 L198.0,526.0 L198.4,525.4 L198.8,524.7 L199.2,524.0 L199.6,523.3 L200.0,522.5 L200.4,521.8 L200.8,521.0 L201.2,520.2 L201.7,519.4 L202.1,518.6 L202.5,517.7 L202.9,516.9 L203.3,516.0 L203.7,515.1 L204.1,514.2 L204.5,513.2 L204.9,512.3 L205.3,511.3 L205.7,510.3 L206.1,509.3 L206.5,508.3 L206.9,507.2 L207.3,506.1 L207.7,505.0 L208.1,503.9 L208.5,502.8 L208.9,501.6 L209.3,500.4 L209.7,499.2 L210.1,498.0 L210.5,496.8 L210.9,495.5 L211.3,494.2 L211.7,492.9 L212.1,491.5 L212.5,490.2 L212.9,488.8 L213.4,487.4 L213.8,485.9 L214.2,484.5 L214.6,483.0 L215.0,481.5 L215.4,480.0 L215.8,478.4 L216.2,476.8 L216.6,475.2 L217.0,473.6 L217.4,472.0 L217.8,470.3 L218.2,468.6 L218.6,466.9 L219.0,465.1 L219.4,463.3 L219.8,461.5 L220.2,459.7 L220.6,457.9 L221.0,456.0 L221.4,454.1 L221.8,452.2 L222.2,450.2 L222.6,448.2 L223.0,446.3 L223.4,444.2 L223.8,442.2 L224.2,440.1 L224.6,438.0 L225.1,435.9 L225.5,433.8 L225.9,431.6 L226.3,429.4 L226.7,427.2 L227.1,425.0 L227.5,422.7 L227.9,420.5 L228.3,418.2 L228.7,415.9 L229.1,413.5 L229.5,411.2 L229.9,408.8 L230.3,406.4 L230.7,404.0 L231.1,401.5 L231.5,399.1 L231.9,396.6 L232.3,394.1 L232.7,391.6 L233.1,389.0 L233.5,386.5 L233.9,383.9 L234.3,381.3 L234.7,378.7 L235.1,376.1 L235.5,373.5 L235.9,370.8 L236.3,368.2 L236.8,365.5 L237.2,362.8 L237.6,360.1 L238.0,357.4 L238.4,354.7 L238.8,352.0 L239.2,349.3 L239.6,346.5 L240.0,343.8 L240.4,341.0 L240.8,338.2 L241.2,335.5 L241.6,332.7 L242.0,329.9 L242.4,327.1 L242.8,324.3 L243.2,321.5 L243.6,318.8 L244.0,316.0 L244.4,313.2 L244.8,310.4 L245.2,307.6 L245.6,304.8 L246.0,302.0 L246.4,299.3 L246.8,296.5 L247.2,293.7 L247.6,291.0 L248.0,288.2 L248.5,285.5 L248.9,282.7 L249.3,280.0 L249.7,277.3 L250.1,274.6 L250.5,271.9 L250.9,269.2 L251.3,266.6 L251.7,263.9 L252.1,261.3 L252.5,258.7 L252.9,256.1 L253.3,253.6 L253.7,251.0 L254.1,248.5 L254.5,246.0 L254.9,243.5 L255.3,241.1 L255.7,238.6 L256.1,236.2 L256.5,233.8 L256.9,231.5 L257.3,229.2 L257.7,226.9 L258.1,224.6 L258.5,222.4 L258.9,220.2 L259.3,218.0 L259.7,215.9 L260.2,213.8 L260.6,211.7 L261.0,209.7 L261.4,207.7 L261.8,205.8 L262.2,203.9 L262.6,202.0 L263.0,200.2 L263.4,198.4 L263.8,196.6 L264.2,194.9 L264.6,193.3 L265.0,191.6 L265.4,190.1 L265.8,188.5 L266.2,187.0 L266.6,185.6 L267.0,184.2 L267.4,182.9 L267.8,181.6 L268.2,180.3 L268.6,179.1 L269.0,178.0 L269.4,176.9 L269.8,175.8 L270.2,174.8 L270.6,173.9 L271.0,173.0 L271.4,172.2 L271.9,171.4 L272.3,170.6 L272.7,170.0 L273.1,169.3 L273.5,168.8 L273.9,168.2 L274.3,167.8 L274.7,167.4 L275.1,167.0 L275.5,166.7 L275.9,166.4 L276.3,166.2 L276.7,166.1 L277.1,166.0 L277.5,166.0 L277.9,166.0 L278.3,166.1 L278.7,166.2 L279.1,166.4 L279.5,166.7 L279.9,167.0 L280.3,167.4 L280.7,167.8 L281.1,168.2 L281.5,168.8 L281.9,169.3 L282.3,170.0 L282.7,170.6 L283.1,171.4 L283.6,172.2 L284.0,173.0 L284.4,173.9 L284.8,174.8 L285.2,175.8 L285.6,176.9 L286.0,178.0 L286.4,179.1 L286.8,180.3 L287.2,181.6 L287.6,182.9 L288.0,184.2 L288.4,185.6 L288.8,187.0 L289.2,188.5 L289.6,190.1 L290.0,191.6 L290.4,193.3 L290.8,194.9 L291.2,196.6 L291.6,198.4 L292.0,200.2 L292.4,202.0 L292.8,203.9 L293.2,205.8 L293.6,207.7 L294.0,209.7 L294.4,211.7 L294.8,213.8 L295.3,215.9 L295.7,218.0 L296.1,220.2 L296.5,222.4 L296.9,224.6 L297.3,226.9 L297.7,229.2 L298.1,231.5 L298.5,233.8 L298.9,236.2 L299.3,238.6 L299.7,241.1 L300.1,243.5 L300.5,246.0 L300.9,248.5 L301.3,251.0 L301.7,253.6 L302.1,256.1 L302.5,258.7 L302.9,261.3 L303.3,263.9 L303.7,266.6 L304.1,269.2 L304.5,271.9 L304.9,274.6 L305.3,277.3 L305.7,280.0 L306.1,282.7 L306.5,285.5 L307.0,288.2 L307.4,291.0 L307.8,293.7 L308.2,296.5 L308.6,299.3 L309.0,302.0 L309.4,304.8 L309.8,307.6 L310.2,310.4 L310.6,313.2 L311.0,316.0 L311.4,318.8 L311.8,321.5 L312.2,324.3 L312.6,327.1 L313.0,329.9 L313.4,332.7 L313.8,335.5 L314.2,338.2 L314.6,341.0 L315.0,343.8 L315.4,346.5 L315.8,349.3 L316.2,352.0 L316.6,354.7 L317.0,357.4 L317.4,360.1 L317.8,362.8 L318.2,365.5 L318.7,368.2 L319.1,370.8 L319.5,373.5 L319.9,376.1 L320.3,378.7 L320.7,381.3 L321.1,383.9 L321.5,386.5 L321.9,389.0 L322.3,391.6 L322.7,394.1 L323.1,396.6 L323.5,399.1 L323.9,401.5 L324.3,404.0 L324.7,406.4 L325.1,408.8 L325.5,411.2 L325.9,413.5 L326.3,415.9 L326.7,418.2 L327.1,420.5 L327.5,422.7 L327.9,425.0 L328.3,427.2 L328.7,429.4 L329.1,431.6 L329.5,433.8 L329.9,435.9 L330.4,438.0 L330.8,440.1 L331.2,442.2 L331.6,444.2 L332.0,446.3 L332.4,448.2 L332.8,450.2 L333.2,452.2 L333.6,454.1 L334.0,456.0 L334.4,457.9 L334.8,459.7 L335.2,461.5 L335.6,463.3 L336.0,465.1 L336.4,466.9 L336.8,468.6 L337.2,470.3 L337.6,472.0 L338.0,473.6 L338.4,475.2 L338.8,476.8 L339.2,478.4 L339.6,480.0 L340.0,481.5 L340.4,483.0 L340.8,484.5 L341.2,485.9 L341.6,487.4 L342.1,488.8 L342.5,490.2 L342.9,491.5 L343.3,492.9 L343.7,494.2 L344.1,495.5 L344.5,496.8 L344.9,498.0 L345.3,499.2 L345.7,500.4 L346.1,501.6 L346.5,502.8 L346.9,503.9 L347.3,505.0 L347.7,506.1 L348.1,507.2 L348.5,508.3 L348.9,509.3 L349.3,510.3 L349.7,511.3 L350.1,512.3 L350.5,513.2 L350.9,514.2 L351.3,515.1 L351.7,516.0 L352.1,516.9 L352.5,517.7 L352.9,518.6 L353.3,519.4 L353.8,520.2 L354.2,521.0 L354.6,521.8 L355.0,522.5 L355.4,523.3 L355.8,524.0 L356.2,524.7 L356.6,525.4 L357.0,526.0 L357.4,526.7 L357.8,527.3 L358.2,528.0 L358.6,528.6 L359.0,529.2 L359.4,529.8 L359.8,530.3 L360.2,530.9 L360.6,531.4 L361.0,532.0 L361.4,532.5 L361.8,533.0 L362.2,533.5 L362.6,534.0 L363.0,534.4 L363.4,534.9 L363.8,535.3 L364.2,535.7 L364.6,536.2 L365.0,536.6 L365.4,537.0 L365.9,537.4 L366.3,537.7 L366.7,538.1 L367.1,538.5 L367.5,538.8 L367.9,539.2 L368.3,539.5 L368.7,539.8 L369.1,540.1 L369.5,540.4 L369.9,540.7 L370.3,541.0 L370.7,541.3 L371.1,541.5 L371.5,541.8 L371.9,542.1 L372.3,542.3 L372.7,542.5 L373.1,542.8 L373.5,543.0 L373.9,543.2 L374.3,543.4 L374.7,543.6 L375.1,543.8 L375.5,544.0 L375.9,544.2 L376.3,544.4 L376.7,544.6 L377.1,544.8 L377.6,544.9 L378.0,545.1 L378.4,545.2 L378.8,545.4 L379.2,545.5 L379.6,545.7 L380.0,545.8 L380.4,545.9 L380.8,546.1 L381.2,546.2 L381.6,546.3 L382.0,546.4 L382.4,546.5 L382.8,546.7 L383.2,546.8 L383.6,546.9 L384.0,547.0 L384.4,547.1 L384.8,547.1 L385.2,547.2 L385.6,547.3 L386.0,547.4 L386.4,547.5 L386.8,547.6 L387.2,547.6 L387.6,547.7 L388.0,547.8 L388.4,547.8 L388.8,547.9 L389.3,548.0 L389.7,548.0 L390.1,548.1 L390.5,548.1 L390.9,548.2 L391.3,548.2 L391.7,548.3 L392.1,548.3 L392.5,548.4 L392.9,548.4 L393.3,548.5 L393.7,548.5 L394.1,548.6 L394.5,548.6 L394.9,548.6 L395.3,548.7 L395.7,548.7 L396.1,548.7 L396.5,548.8 L396.9,548.8 L397.3,548.8 L397.7,548.9 L398.1,548.9 L398.5,548.9 L398.9,548.9 L399.3,549.0 L399.7,549.0 L400.1,549.0 L400.5,549.0 L401.0,549.0 L401.4,549.1 L401.8,549.1 L402.2,549.1 L402.6,549.1 L403.0,549.1 L403.4,549.2 L403.8,549.2 L404.2,549.2 L404.6,549.2 L405.0,549.2 L405.4,549.2 L405.8,549.2 L406.2,549.2 L406.6,549.3 L407.0,549.3 L407.4,549.3 L407.8,549.3 L408.2,549.3 L408.6,549.3 L409.0,549.3 L409.4,549.3 L409.8,549.3 L410.2,549.3 L410.6,549.3 L411.0,549.4 L411.4,549.4 L411.8,549.4 L412.2,549.4 L412.7,549.4 L413.1,549.4 L413.5,549.4 L413.9,549.4 L414.3,549.4 L414.7,549.4 L415.1,549.4 L415.5,549.4 L415.9,549.4 L416.3,549.4 L416.7,549.4 L417.1,549.4 L417.5,549.4 L417.9,549.4 L418.3,549.4 L418.7,549.4 L419.1,549.4 L419.5,549.4 L419.9,549.5 L420.3,549.5 L420.7,549.5 L421.1,549.5 L421.5,549.5 L421.9,549.5 L422.3,549.5 L422.7,549.5 L423.1,549.5 L423.5,549.5 L423.9,549.5 L424.4,549.5 L424.8,549.5 L425.2,549.5 L425.6,549.5 L426.0,549.5 L426.4,549.5 L426.8,549.5 L427.2,549.5 L427.6,549.5 L428.0,549.5 L428.4,549.5 L428.8,549.5 L429.2,549.5 L429.6,549.5 L430.0,549.5 L430.4,549.5 L430.8,549.5 L431.2,549.5 L431.6,549.5 L432.0,549.5 L432.4,549.5 L432.8,549.5 L433.2,549.5 L433.6,549.5 L434.0,549.5 L434.4,549.5 L434.8,549.5 L435.2,549.5 L435.6,549.5 L436.1,549.5 L436.5,549.5 L436.9,549.5 L437.3,549.5 L437.7,549.5 L438.1,549.5 L438.5,549.5 L438.9,549.5 L439.3,549.5 L439.7,549.5 L440.1,549.5 L440.5,549.5 L440.9,549.5 L441.3,549.5 L441.7,549.5 L442.1,549.5 L442.5,549.5 L442.9,549.5 L443.3,549.5 L443.7,549.5 L444.1,549.5 L444.5,549.5 L444.9,549.5 L445.3,549.5 L445.7,549.5 L446.1,549.5 L446.5,549.5 L446.9,549.5 L447.3,549.5 L447.8,549.5 L448.2,549.5 L448.6,549.5 L449.0,549.5 L449.4,549.5 L449.8,549.5 L450.2,549.5 L450.6,549.5 L451.0,549.5 L451.4,549.5 L451.8,549.5 L452.2,549.5 L452.6,549.5 L453.0,549.5 L453.4,549.5 L453.8,549.5 L454.2,549.5 L454.6,549.5 L455.0,549.5 L455.4,549.5 L455.8,549.5 L456.2,549.5 L456.6,549.5 L457.0,549.5 L457.4,549.5 L457.8,549.5 L458.2,549.5 L458.6,549.5 L459.0,549.5 L459.5,549.5 L459.9,549.5 L460.3,549.5 L460.7,549.5 L461.1,549.5 L461.5,549.5 L461.9,549.5 L462.3,549.5 L462.7,549.5 L463.1,549.5 L463.5,549.5 L463.9,549.5 L464.3,549.5 L464.7,549.5 L465.1,549.5 L465.5,549.5 L465.9,549.5 L466.3,549.5 L466.7,549.5 L467.1,549.5 L467.5,549.5 L467.9,549.5 L468.3,549.5 L468.7,549.5 L469.1,549.5 L469.5,549.5 L469.9,549.5 L470.3,549.5 L470.7,549.5 L471.2,549.5 L471.6,549.5 L472.0,549.5 L472.4,549.5 L472.8,549.5 L473.2,549.5 L473.6,549.5 L474.0,549.5 L474.4,549.5 L474.8,549.5 L475.2,549.5 L475.6,549.5 L476.0,549.5 L476.4,549.5 L476.8,549.5 L477.2,549.5 L477.6,549.5 L478.0,549.5 L478.4,549.5 L478.8,549.5 L479.2,549.5 L479.6,549.5 L480.0,549.5 L480.4,549.5 L480.8,549.5 L481.2,549.5 L481.6,549.5 L482.0,549.5 L482.4,549.5 L482.9,549.5 L483.3,549.5 L483.7,549.5 L484.1,549.5 L484.5,549.5 L484.9,549.5 L485.3,549.5 L485.7,549.5 L486.1,549.5 L486.5,549.5 L486.9,549.5 L487.3,549.5 L487.7,549.5 L488.1,549.5 L488.5,549.5 L488.9,549.5 L489.3,549.5 L489.7,549.5 L490.1,549.5 L490.5,549.5 L490.9,549.5 L491.3,549.5 L491.7,549.5 L492.1,549.5 L492.5,549.5 L492.9,549.5 L493.3,549.5 L493.7,549.5 L494.1,549.5 L494.6,549.5 L495.0,549.5 L495.4,549.5 L495.8,549.5 L496.2,549.5 L496.6,549.5 L497.0,549.5 L497.4,549.5 L497.8,549.5 L498.2,549.5 L498.6,549.5 L499.0,549.5 L499.4,549.5 L499.8,549.5 L500.2,549.5 L500.6,549.5 L501.0,549.5 L501.4,549.5 L501.8,549.5 L502.2,549.5 L502.6,549.5 L503.0,549.5 L503.4,549.5 L503.8,549.5 L504.2,549.5 L504.6,549.5 L505.0,549.5 L505.4,549.5 L505.8,549.5 L506.3,549.5 L506.7,549.5 L507.1,549.5 L507.5,549.5 L507.9,549.5 L508.3,549.5 L508.7,549.5 L509.1,549.5 L509.5,549.5 L509.9,549.5 L510.3,549.5 L510.7,549.5 L511.1,549.5 L511.5,549.5 L511.9,549.5 L512.3,549.5 L512.7,549.5 L513.1,549.5 L513.5,549.5 L513.9,549.5 L514.3,549.5 L514.7,549.5 L515.1,549.5 L515.5,549.5 L515.9,549.5 L516.3,549.5 L516.7,549.5 L517.1,549.5 L517.5,549.5 L518.0,549.5 L518.4,549.5 L518.8,549.5 L519.2,549.5 L519.6,549.5 L520.0,549.5 L520.4,549.5 L520.8,549.5 L521.2,549.5 L521.6,549.5 L522.0,549.5 L522.4,549.5 L522.8,549.5 L523.2,549.5 L523.6,549.5 L524.0,549.5 L524.4,549.5 L524.8,549.5 L525.2,549.5 L525.6,549.5 L526.0,549.5 L526.4,549.5 L526.8,549.5 L527.2,549.5 L527.6,549.5 L528.0,549.5 L528.4,549.5 L528.8,549.5 L529.2,549.5 L529.7,549.5 L530.1,549.5 L530.5,549.5 L530.9,549.5 L531.3,549.5 L531.7,549.5 L532.1,549.5 L532.5,549.5 L532.9,549.5 L533.3,549.5 L533.7,549.5 L534.1,549.5 L534.5,549.5 L534.9,549.5 L535.3,549.5 L535.7,549.5 L536.1,549.5 L536.5,549.5 L536.9,549.5 L537.3,549.5 L537.7,549.5 L538.1,549.5 L538.5,549.5 L538.9,549.5 L539.3,549.5 L539.7,549.5 L540.1,549.5 L540.5,549.5 L540.9,549.5 L541.3,549.5 L541.8,549.5 L542.2,549.5 L542.6,549.5 L543.0,549.5 L543.4,549.5 L543.8,549.5 L544.2,549.5 L544.6,549.5 L545.0,549.5 L545.4,549.5 L545.8,549.5 L546.2,549.5 L546.6,549.5 L547.0,549.5 L547.4,549.5 L547.8,549.5 L548.2,549.5 L548.6,549.5 L549.0,549.5 L549.4,549.5 L549.8,549.5 L550.2,549.5 L550.6,549.5 L551.0,549.5 L551.4,549.5 L551.8,549.5 L552.2,549.5 L552.6,549.5 L553.0,549.5 L553.5,549.5 L553.9,549.5 L554.3,549.5 L554.7,549.5 L555.1,549.5 L555.5,549.5 L555.9,549.5 L556.3,549.5 L556.7,549.5 L557.1,549.5 L557.5,549.5 L557.9,549.5 L558.3,549.5 L558.7,549.5 L559.1,549.5 L559.5,549.5 L559.9,549.5" fill="none" stroke="#200010" stroke-width="2"/>
<path d="M-4.9,293.5 L-4.2,292.9 L-3.5,292.3 L-2.8,291.7 L-2.1,291.1 L-1.4,290.5 L-0.7,290.0 L0.0,289.4 L0.7,288.8 L1.4,288.2 L2.2,287.6 L2.9,287.0 L3.6,286.4 L4.3,285.8 L5.0,285.2 L5.7,284.7 L6.4,284.1 L7.1,283.5 L7.8,282.9 L8.5,282.3 L9.2,281.8 L9.9,281.2 L10.6,280.6 L11.3,280.0 L12.0,279.5 L12.7,278.9 L13.4,278.3 L14.2,277.8 L14.9,277.2 L15.6,276.6 L16.3,276.1 L17.0,275.5 L17.7,274.9 L18.4,274.4 L19.1,273.8 L19.8,273.2 L20.5,272.7 L21.2,272.1 L21.9,271.6 L22.6,271.0 L23.3,270.5 L24.0,269.9 L24.7,269.4 L25.5,268.8 L26.2,268.3 L26.9,267.7 L27.6,267.2 L28.3,266.6 L29.0,266.1 L29.7,265.5 L30.4,265.0 L31.1,264.5 L31.8,263.9 L32.5,263.4 L33.2,262.9 L33.9,262.3 L34.6,261.8 L35.3,261.3 L36.0,260.7 L36.7,260.2 L37.5,259.7 L38.2,259.1 L38.9,258.6 L39.6,258.1 L40.3,257.6 L41.0,257.0 L41.7,256.5 L42.4,256.0 L43.1,255.5 L43.8,255.0 L44.5,254.5 L45.2,253.9 L45.9,253.4 L46.6,252.9 L47.3,252.4 L48.0,251.9 L48.7,251.4 L49.5,250.9 L50.2,250.4 L50.9,249.9 L51.6,249.4 L52.3,248.9 L53.0,248.4 L53.7,247.9 L54.4,247.4 L55.1,246.9 L55.8,246.4 L56.5,245.9 L57.2,245.4 L57.9,244.9 L58.6,244.4 L59.3,243.9 L60.0,243.5 L60.8,243.0 L61.5,242.5 L62.2,242.0 L62.9,241.5 L63.6,241.1 L64.3,240.6 L65.0,240.1 L65.7,239.6 L66.4,239.1 L67.1,238.7 L67.8,238.2 L68.5,237.7 L69.2,237.3 L69.9,236.8 L70.6,236.3 L71.3,235.9 L72.0,235.4 L72.8,234.9 L73.5,234.5 L74.2,234.0 L74.9,233.6 L75.6,233.1 L76.3,232.7 L77.0,232.2 L77.7,231.8 L78.4,231.3 L79.1,230.9 L79.8,230.4 L80.5,230.0 L81.2,229.5 L81.9,229.1 L82.6,228.6 L83.3,228.2 L84.1,227.8 L84.8,227.3 L85.5,226.9 L86.2,226.4 L86.9,226.0 L87.6,225.6 L88.3,225.1 L89.0,224.7 L89.7,224.3 L90.4,223.9 L91.1,223.4 L91.8,223.0 L92.5,222.6 L93.2,222.2 L93.9,221.8 L94.6,221.3 L95.3,220.9 L96.1,220.5 L96.8,220.1 L97.5,219.7 L98.2,219.3 L98.9,218.9 L99.6,218.5 L100.3,218.1 L101.0,217.6 L101.7,217.2 L102.4,216.8 L103.1,216.4 L103.8,216.0 L104.5,215.6 L105.2,215.3 L105.9,214.9 L106.6,214.5 L107.3,214.1 L108.1,213.7 L108.8,213.3 L109.5,212.9 L110.2,212.5 L110.9,212.1 L111.6,211.8 L112.3,211.4 L113.0,211.0 L113.7,210.6 L114.4,210.2 L115.1,209.9 L115.8,209.5 L116.5,209.1 L117.2,208.8 L117.9,208.4 L118.6,208.0 L119.4,207.7 L120.1,207.3 L120.8,206.9 L121.5,206.6 L122.2,206.2 L122.9,205.8 L123.6,205.5 L124.3,205.1 L125.0,204.8 L125.7,204.4 L126.4,204.1 L127.1,203.7 L127.8,203.4 L128.5,203.0 L129.2,202.7 L129.9,202.3 L130.6,202.0 L131.4,201.7 L132.1,201.3 L132.8,201.0 L133.5,200.7 L134.2,200.3 L134.9,200.0 L135.6,199.7 L136.3,199.3 L137.0,199.0 L137.7,198.7 L138.4,198.4 L139.1,198.0 L139.8,197.7 L140.5,197.4 L141.2,197.1 L141.9,196.8 L142.7,196.4 L143.4,196.1 L144.1,195.8 L144.8,195.5 L145.5,195.2 L146.2,194.9 L146.9,194.6 L147.6,194.3 L148.3,194.0 L149.0,193.7 L149.7,193.4 L150.4,193.1 L151.1,192.8 L151.8,192.5 L152.5,192.2 L153.2,191.9 L153.9,191.6 L154.7,191.3 L155.4,191.0 L156.1,190.7 L156.8,190.5 L157.5,190.2 L158.2,189.9 L158.9,189.6 L159.6,189.3 L160.3,189.1 L161.0,188.8 L161.7,188.5 L162.4,188.2 L163.1,188.0 L163.8,187.7 L164.5,187.4 L165.2,187.2 L165.9,186.9 L166.7,186.7 L167.4,186.4 L168.1,186.1 L168.8,185.9 L169.5,185.6 L170.2,185.4 L170.9,185.1 L171.6,184.9 L172.3,184.6 L173.0,184.4 L173.7,184.1 L174.4,183.9 L175.1,183.6 L175.8,183.4 L176.5,183.2 L177.2,182.9 L178.0,182.7 L178.7,182.5 L179.4,182.2 L180.1,182.0 L180.8,181.8 L181.5,181.5 L182.2,181.3 L182.9,181.1 L183.6,180.9 L184.3,180.6 L185.0,180.4 L185.7,180.2 L186.4,180.0 L187.1,179.8 L187.8,179.6 L188.5,179.3 L189.2,179.1 L190.0,178.9 L190.7,178.7 L191.4,178.5 L192.1,178.3 L192.8,178.1 L193.5,177.9 L194.2,177.7 L194.9,177.5 L195.6,177.3 L196.3,177.1 L197.0,176.9 L197.7,176.7 L198.4,176.6 L199.1,176.4 L199.8,176.2 L200.5,176.0 L201.2,175.8 L202.0,175.6 L202.7,175.5 L203.4,175.3 L204.1,175.1 L204.8,174.9 L205.5,174.8 L206.2,174.6 L206.9,174.4 L207.6,174.3 L208.3,174.1 L209.0,173.9 L209.7,173.8 L210.4,173.6 L211.1,173.4 L211.8,173.3 L212.5,173.1 L213.3,173.0 L214.0,172.8 L214.7,172.7 L215.4,172.5 L216.1,172.4 L216.8,172.2 L217.5,172.1 L218.2,172.0 L218.9,171.8 L219.6,171.7 L220.3,171.5 L221.0,171.4 L221.7,171.3 L222.4,171.1 L223.1,171.0 L223.8,170.9 L224.5,170.7 L225.3,170.6 L226.0,170.5 L226.7,170.4 L227.4,170.3 L228.1,170.1 L228.8,170.0 L229.5,169.9 L230.2,169.8 L230.9,169.7 L231.6,169.6 L232.3,169.5 L233.0,169.4 L233.7,169.2 L234.4,169.1 L235.1,169.0 L235.8,168.9 L236.6,168.8 L237.3,168.7 L238.0,168.6 L238.7,168.6 L239.4,168.5 L240.1,168.4 L240.8,168.3 L241.5,168.2 L242.2,168.1 L242.9,168.0 L243.6,167.9 L244.3,167.9 L245.0,167.8 L245.7,167.7 L246.4,167.6 L247.1,167.6 L247.8,167.5 L248.6,167.4 L249.3,167.4 L250.0,167.3 L250.7,167.2 L251.4,167.2 L252.1,167.1 L252.8,167.0 L253.5,167.0 L254.2,166.9 L254.9,166.9 L255.6,166.8 L256.3,166.8 L257.0,166.7 L257.7,166.7 L258.4,166.6 L259.1,166.6 L259.8,166.5 L260.6,166.5 L261.3,166.4 L262.0,166.4 L262.7,166.4 L263.4,166.3 L264.1,166.3 L264.8,166.3 L265.5,166.2 L266.2,166.2 L266.9,166.2 L267.6,166.2 L268.3,166.1 L269.0,166.1 L269.7,166.1 L270.4,166.1 L271.1,166.1 L271.9,166.1 L272.6,166.0 L273.3,166.0 L274.0,166.0 L274.7,166.0 L275.4,166.0 L276.1,166.0 L276.8,166.0 L277.5,166.0 L278.2,166.0 L278.9,166.0 L279.6,166.0 L280.3,166.0 L281.0,166.0 L281.7,166.0 L282.4,166.0 L283.1,166.1 L283.9,166.1 L284.6,166.1 L285.3,166.1 L286.0,166.1 L286.7,166.1 L287.4,166.2 L288.1,166.2 L288.8,166.2 L289.5,166.2 L290.2,166.3 L290.9,166.3 L291.6,166.3 L292.3,166.4 L293.0,166.4 L293.7,166.4 L294.4,166.5 L295.2,166.5 L295.9,166.6 L296.6,166.6 L297.3,166.7 L298.0,166.7 L298.7,166.8 L299.4,166.8 L300.1,166.9 L300.8,166.9 L301.5,167.0 L302.2,167.0 L302.9,167.1 L303.6,167.2 L304.3,167.2 L305.0,167.3 L305.7,167.4 L306.4,167.4 L307.2,167.5 L307.9,167.6 L308.6,167.6 L309.3,167.7 L310.0,167.8 L310.7,167.9 L311.4,167.9 L312.1,168.0 L312.8,168.1 L313.5,168.2 L314.2,168.3 L314.9,168.4 L315.6,168.5 L316.3,168.6 L317.0,168.6 L317.7,168.7 L318.4,168.8 L319.2,168.9 L319.9,169.0 L320.6,169.1 L321.3,169.2 L322.0,169.4 L322.7,169.5 L323.4,169.6 L324.1,169.7 L324.8,169.8 L325.5,169.9 L326.2,170.0 L326.9,170.1 L327.6,170.3 L328.3,170.4 L329.0,170.5 L329.7,170.6 L330.5,170.7 L331.2,170.9 L331.9,171.0 L332.6,171.1 L333.3,171.3 L334.0,171.4 L334.7,171.5 L335.4,171.7 L336.1,171.8 L336.8,172.0 L337.5,172.1 L338.2,172.2 L338.9,172.4 L339.6,172.5 L340.3,172.7 L341.0,172.8 L341.7,173.0 L342.5,173.1 L343.2,173.3 L343.9,173.4 L344.6,173.6 L345.3,173.8 L346.0,173.9 L346.7,174.1 L347.4,174.3 L348.1,174.4 L348.8,174.6 L349.5,174.8 L350.2,174.9 L350.9,175.1 L351.6,175.3 L352.3,175.5 L353.0,175.6 L353.8,175.8 L354.5,176.0 L355.2,176.2 L355.9,176.4 L356.6,176.6 L357.3,176.7 L358.0,176.9 L358.7,177.1 L359.4,177.3 L360.1,177.5 L360.8,177.7 L361.5,177.9 L362.2,178.1 L362.9,178.3 L363.6,178.5 L364.3,178.7 L365.0,178.9 L365.8,179.1 L366.5,179.3 L367.2,179.6 L367.9,179.8 L368.6,180.0 L369.3,180.2 L370.0,180.4 L370.7,180.6 L371.4,180.9 L372.1,181.1 L372.8,181.3 L373.5,181.5 L374.2,181.8 L374.9,182.0 L375.6,182.2 L376.3,182.5 L377.0,182.7 L377.8,182.9 L378.5,183.2 L379.2,183.4 L379.9,183.6 L380.6,183.9 L381.3,184.1 L382.0,184.4 L382.7,184.6 L383.4,184.9 L384.1,185.1 L384.8,185.4 L385.5,185.6 L386.2,185.9 L386.9,186.1 L387.6,186.4 L388.3,186.7 L389.1,186.9 L389.8,187.2 L390.5,187.4 L391.2,187.7 L391.9,188.0 L392.6,188.2 L393.3,188.5 L394.0,188.8 L394.7,189.1 L395.4,189.3 L396.1,189.6 L396.8,189.9 L397.5,190.2 L398.2,190.5 L398.9,190.7 L399.6,191.0 L400.3,191.3 L401.1,191.6 L401.8,191.9 L402.5,192.2 L403.2,192.5 L403.9,192.8 L404.6,193.1 L405.3,193.4 L406.0,193.7 L406.7,194.0 L407.4,194.3 L408.1,194.6 L408.8,194.9 L409.5,195.2 L410.2,195.5 L410.9,195.8 L411.6,196.1 L412.3,196.4 L413.1,196.8 L413.8,197.1 L414.5,197.4 L415.2,197.7 L415.9,198.0 L416.6,198.4 L417.3,198.7 L418.0,199.0 L418.7,199.3 L419.4,199.7 L420.1,200.0 L420.8,200.3 L421.5,200.7 L422.2,201.0 L422.9,201.3 L423.6,201.7 L424.4,202.0 L425.1,202.3 L425.8,202.7 L426.5,203.0 L427.2,203.4 L427.9,203.7 L428.6,204.1 L429.3,204.4 L430.0,204.8 L430.7,205.1 L431.4,205.5 L432.1,205.8 L432.8,206.2 L433.5,206.6 L434.2,206.9 L434.9,207.3 L435.6,207.7 L436.4,208.0 L437.1,208.4 L437.8,208.8 L438.5,209.1 L439.2,209.5 L439.9,209.9 L440.6,210.2 L441.3,210.6 L442.0,211.0 L442.7,211.4 L443.4,211.8 L444.1,212.1 L444.8,212.5 L445.5,212.9 L446.2,213.3 L446.9,213.7 L447.7,214.1 L448.4,214.5 L449.1,214.9 L449.8,215.3 L450.5,215.6 L451.2,216.0 L451.9,216.4 L452.6,216.8 L453.3,217.2 L454.0,217.6 L454.7,218.1 L455.4,218.5 L456.1,218.9 L456.8,219.3 L457.5,219.7 L458.2,220.1 L458.9,220.5 L459.7,220.9 L460.4,221.3 L461.1,221.8 L461.8,222.2 L462.5,222.6 L463.2,223.0 L463.9,223.4 L464.6,223.9 L465.3,224.3 L466.0,224.7 L466.7,225.1 L467.4,225.6 L468.1,226.0 L468.8,226.4 L469.5,226.9 L470.2,227.3 L470.9,227.8 L471.7,228.2 L472.4,228.6 L473.1,229.1 L473.8,229.5 L474.5,230.0 L475.2,230.4 L475.9,230.9 L476.6,231.3 L477.3,231.8 L478.0,232.2 L478.7,232.7 L479.4,233.1 L480.1,233.6 L480.8,234.0 L481.5,234.5 L482.2,234.9 L483.0,235.4 L483.7,235.9 L484.4,236.3 L485.1,236.8 L485.8,237.3 L486.5,237.7 L487.2,238.2 L487.9,238.7 L488.6,239.1 L489.3,239.6 L490.0,240.1 L490.7,240.6 L491.4,241.1 L492.1,241.5 L492.8,242.0 L493.5,242.5 L494.2,243.0 L495.0,243.5 L495.7,243.9 L496.4,244.4 L497.1,244.9 L497.8,245.4 L498.5,245.9 L499.2,246.4 L499.9,246.9 L500.6,247.4 L501.3,247.9 L502.0,248.4 L502.7,248.9 L503.4,249.4 L504.1,249.9 L504.8,250.4 L505.5,250.9 L506.3,251.4 L507.0,251.9 L507.7,252.4 L508.4,252.9 L509.1,253.4 L509.8,253.9 L510.5,254.5 L511.2,255.0 L511.9,255.5 L512.6,256.0 L513.3,256.5 L514.0,257.0 L514.7,257.6 L515.4,258.1 L516.1,258.6 L516.8,259.1 L517.5,259.7 L518.3,260.2 L519.0,260.7 L519.7,261.3 L520.4,261.8 L521.1,262.3 L521.8,262.9 L522.5,263.4 L523.2,263.9 L523.9,264.5 L524.6,265.0 L525.3,265.5 L526.0,266.1 L526.7,266.6 L527.4,267.2 L528.1,267.7 L528.8,268.3 L529.5,268.8 L530.3,269.4 L531.0,269.9 L531.7,270.5 L532.4,271.0 L533.1,271.6 L533.8,272.1 L534.5,272.7 L535.2,273.2 L535.9,273.8 L536.6,274.4 L537.3,274.9 L538.0,275.5 L538.7,276.1 L539.4,276.6 L540.1,277.2 L540.8,277.8 L541.6,278.3 L542.3,278.9 L543.0,279.5 L543.7,280.0 L544.4,280.6 L545.1,281.2 L545.8,281.8 L546.5,282.3 L547.2,282.9 L547.9,283.5 L548.6,284.1 L549.3,284.7 L550.0,285.2 L550.7,285.8 L551.4,286.4 L552.1,287.0 L552.8,287.6 L553.6,288.2 L554.3,288.8 L555.0,289.4 L555.7,290.0 L556.4,290.5 L557.1,291.1 L557.8,291.7 L558.5,292.3 L559.2,292.9 L559.9,293.5" fill="none" stroke="#101060" stroke-width="2.2" stroke-dasharray="2.5 3"/>
<path d="M-4.9,280.0 L-4.2,279.5 L-3.5,279.1 L-2.8,278.6 L-2.1,278.1 L-1.4,277.6 L-0.7,277.2 L0.0,276.7 L0.7,276.2 L1.4,275.7 L2.2,275.3 L2.9,274.8 L3.6,274.3 L4.3,273.9 L5.0,273.4 L5.7,272.9 L6.4,272.4 L7.1,272.0 L7.8,271.5 L8.5,271.0 L9.2,270.6 L9.9,270.1 L10.6,269.6 L11.3,269.2 L12.0,268.7 L12.7,268.2 L13.4,267.8 L14.2,267.3 L14.9,266.9 L15.6,266.4 L16.3,265.9 L17.0,265.5 L17.7,265.0 L18.4,264.5 L19.1,264.1 L19.8,263.6 L20.5,263.2 L21.2,262.7 L21.9,262.2 L22.6,261.8 L23.3,261.3 L24.0,260.9 L24.7,260.4 L25.5,260.0 L26.2,259.5 L26.9,259.0 L27.6,258.6 L28.3,258.1 L29.0,257.7 L29.7,257.2 L30.4,256.8 L31.1,256.3 L31.8,255.9 L32.5,255.4 L33.2,255.0 L33.9,254.5 L34.6,254.1 L35.3,253.6 L36.0,253.2 L36.7,252.7 L37.5,252.3 L38.2,251.8 L38.9,251.4 L39.6,251.0 L40.3,250.5 L41.0,250.1 L41.7,249.6 L42.4,249.2 L43.1,248.7 L43.8,248.3 L44.5,247.9 L45.2,247.4 L45.9,247.0 L46.6,246.6 L47.3,246.1 L48.0,245.7 L48.7,245.2 L49.5,244.8 L50.2,244.4 L50.9,243.9 L51.6,243.5 L52.3,243.1 L53.0,242.6 L53.7,242.2 L54.4,241.8 L55.1,241.4 L55.8,240.9 L56.5,240.5 L57.2,240.1 L57.9,239.7 L58.6,239.2 L59.3,238.8 L60.0,238.4 L60.8,238.0 L61.5,237.5 L62.2,237.1 L62.9,236.7 L63.6,236.3 L64.3,235.9 L65.0,235.4 L65.7,235.0 L66.4,234.6 L67.1,234.2 L67.8,233.8 L68.5,233.4 L69.2,233.0 L69.9,232.5 L70.6,232.1 L71.3,231.7 L72.0,231.3 L72.8,230.9 L73.5,230.5 L74.2,230.1 L74.9,229.7 L75.6,229.3 L76.3,228.9 L77.0,228.5 L77.7,228.1 L78.4,227.7 L79.1,227.3 L79.8,226.9 L80.5,226.5 L81.2,226.1 L81.9,225.7 L82.6,225.3 L83.3,224.9 L84.1,224.5 L84.8,224.1 L85.5,223.7 L86.2,223.3 L86.9,222.9 L87.6,222.6 L88.3,222.2 L89.0,221.8 L89.7,221.4 L90.4,221.0 L91.1,220.6 L91.8,220.2 L92.5,219.9 L93.2,219.5 L93.9,219.1 L94.6,218.7 L95.3,218.4 L96.1,218.0 L96.8,217.6 L97.5,217.2 L98.2,216.9 L98.9,216.5 L99.6,216.1 L100.3,215.7 L101.0,215.4 L101.7,215.0 L102.4,214.6 L103.1,214.3 L103.8,213.9 L104.5,213.5 L105.2,213.2 L105.9,212.8 L106.6,212.5 L107.3,212.1 L108.1,211.7 L108.8,211.4 L109.5,211.0 L110.2,210.7 L110.9,210.3 L111.6,210.0 L112.3,209.6 L113.0,209.3 L113.7,208.9 L114.4,208.6 L115.1,208.2 L115.8,207.9 L116.5,207.5 L117.2,207.2 L117.9,206.8 L118.6,206.5 L119.4,206.2 L120.1,205.8 L120.8,205.5 L121.5,205.2 L122.2,204.8 L122.9,204.5 L123.6,204.2 L124.3,203.8 L125.0,203.5 L125.7,203.2 L126.4,202.8 L127.1,202.5 L127.8,202.2 L128.5,201.9 L129.2,201.5 L129.9,201.2 L130.6,200.9 L131.4,200.6 L132.1,200.3 L132.8,199.9 L133.5,199.6 L134.2,199.3 L134.9,199.0 L135.6,198.7 L136.3,198.4 L137.0,198.1 L137.7,197.8 L138.4,197.5 L139.1,197.1 L139.8,196.8 L140.5,196.5 L141.2,196.2 L141.9,195.9 L142.7,195.6 L143.4,195.3 L144.1,195.0 L144.8,194.8 L145.5,194.5 L146.2,194.2 L146.9,193.9 L147.6,193.6 L148.3,193.3 L149.0,193.0 L149.7,192.7 L150.4,192.4 L151.1,192.2 L151.8,191.9 L152.5,191.6 L153.2,191.3 L153.9,191.0 L154.7,190.8 L155.4,190.5 L156.1,190.2 L156.8,189.9 L157.5,189.7 L158.2,189.4 L158.9,189.1 L159.6,188.9 L160.3,188.6 L161.0,188.3 L161.7,188.1 L162.4,187.8 L163.1,187.6 L163.8,187.3 L164.5,187.0 L165.2,186.8 L165.9,186.5 L166.7,186.3 L167.4,186.0 L168.1,185.8 L168.8,185.5 L169.5,185.3 L170.2,185.0 L170.9,184.8 L171.6,184.6 L172.3,184.3 L173.0,184.1 L173.7,183.8 L174.4,183.6 L175.1,183.4 L175.8,183.1 L176.5,182.9 L177.2,182.7 L178.0,182.4 L178.7,182.2 L179.4,182.0 L180.1,181.8 L180.8,181.5 L181.5,181.3 L182.2,181.1 L182.9,180.9 L183.6,180.7 L184.3,180.5 L185.0,180.2 L185.7,180.0 L186.4,179.8 L187.1,179.6 L187.8,179.4 L188.5,179.2 L189.2,179.0 L190.0,178.8 L190.7,178.6 L191.4,178.4 L192.1,178.2 L192.8,178.0 L193.5,177.8 L194.2,177.6 L194.9,177.4 L195.6,177.2 L196.3,177.0 L197.0,176.8 L197.7,176.6 L198.4,176.5 L199.1,176.3 L199.8,176.1 L200.5,175.9 L201.2,175.7 L202.0,175.6 L202.7,175.4 L203.4,175.2 L204.1,175.0 L204.8,174.9 L205.5,174.7 L206.2,174.5 L206.9,174.4 L207.6,174.2 L208.3,174.0 L209.0,173.9 L209.7,173.7 L210.4,173.6 L211.1,173.4 L211.8,173.2 L212.5,173.1 L213.3,172.9 L214.0,172.8 L214.7,172.6 L215.4,172.5 L216.1,172.3 L216.8,172.2 L217.5,172.1 L218.2,171.9 L218.9,171.8 L219.6,171.6 L220.3,171.5 L221.0,171.4 L221.7,171.2 L222.4,171.1 L223.1,171.0 L223.8,170.9 L224.5,170.7 L225.3,170.6 L226.0,170.5 L226.7,170.4 L227.4,170.2 L228.1,170.1 L228.8,170.0 L229.5,169.9 L230.2,169.8 L230.9,169.7 L231.6,169.6 L232.3,169.4 L233.0,169.3 L233.7,169.2 L234.4,169.1 L235.1,169.0 L235.8,168.9 L236.6,168.8 L237.3,168.7 L238.0,168.6 L238.7,168.5 L239.4,168.5 L240.1,168.4 L240.8,168.3 L241.5,168.2 L242.2,168.1 L242.9,168.0 L243.6,167.9 L244.3,167.9 L245.0,167.8 L245.7,167.7 L246.4,167.6 L247.1,167.6 L247.8,167.5 L248.6,167.4 L249.3,167.4 L250.0,167.3 L250.7,167.2 L251.4,167.2 L252.1,167.1 L252.8,167.0 L253.5,167.0 L254.2,166.9 L254.9,166.9 L255.6,166.8 L256.3,166.8 L257.0,166.7 L257.7,166.7 L258.4,166.6 L259.1,166.6 L259.8,166.5 L260.6,166.5 L261.3,166.4 L262.0,166.4 L262.7,166.4 L263.4,166.3 L264.1,166.3 L264.8,166.3 L265.5,166.2 L266.2,166.2 L266.9,166.2 L267.6,166.2 L268.3,166.1 L269.0,166.1 L269.7,166.1 L270.4,166.1 L271.1,166.1 L271.9,166.1 L272.6,166.0 L273.3,166.0 L274.0,166.0 L274.7,166.0 L275.4,166.0 L276.1,166.0 L276.8,166.0 L277.5,166.0 L278.2,166.0 L278.9,166.0 L279.6,166.0 L280.3,166.0 L281.0,166.0 L281.7,166.0 L282.4,166.0 L283.1,166.1 L283.9,166.1 L284.6,166.1 L285.3,166.1 L286.0,166.1 L286.7,166.1 L287.4,166.2 L288.1,166.2 L288.8,166.2 L289.5,166.2 L290.2,166.3 L290.9,166.3 L291.6,166.3 L292.3,166.4 L293.0,166.4 L293.7,166.4 L294.4,166.5 L295.2,166.5 L295.9,166.6 L296.6,166.6 L297.3,166.7 L298.0,166.7 L298.7,166.8 L299.4,166.8 L300.1,166.9 L300.8,166.9 L301.5,167.0 L302.2,167.0 L302.9,167.1 L303.6,167.2 L304.3,167.2 L305.0,167.3 L305.7,167.4 L306.4,167.4 L307.2,167.5 L307.9,167.6 L308.6,167.6 L309.3,167.7 L310.0,167.8 L310.7,167.9 L311.4,167.9 L312.1,168.0 L312.8,168.1 L313.5,168.2 L314.2,168.3 L314.9,168.4 L315.6,168.5 L316.3,168.5 L317.0,168.6 L317.7,168.7 L318.4,168.8 L319.2,168.9 L319.9,169.0 L320.6,169.1 L321.3,169.2 L322.0,169.3 L322.7,169.4 L323.4,169.6 L324.1,169.7 L324.8,169.8 L325.5,169.9 L326.2,170.0 L326.9,170.1 L327.6,170.2 L328.3,170.4 L329.0,170.5 L329.7,170.6 L330.5,170.7 L331.2,170.9 L331.9,171.0 L332.6,171.1 L333.3,171.2 L334.0,171.4 L334.7,171.5 L335.4,171.6 L336.1,171.8 L336.8,171.9 L337.5,172.1 L338.2,172.2 L338.9,172.3 L339.6,172.5 L340.3,172.6 L341.0,172.8 L341.7,172.9 L342.5,173.1 L343.2,173.2 L343.9,173.4 L344.6,173.6 L345.3,173.7 L346.0,173.9 L346.7,174.0 L347.4,174.2 L348.1,174.4 L348.8,174.5 L349.5,174.7 L350.2,174.9 L350.9,175.0 L351.6,175.2 L352.3,175.4 L353.0,175.6 L353.8,175.7 L354.5,175.9 L355.2,176.1 L355.9,176.3 L356.6,176.5 L357.3,176.6 L358.0,176.8 L358.7,177.0 L359.4,177.2 L360.1,177.4 L360.8,177.6 L361.5,177.8 L362.2,178.0 L362.9,178.2 L363.6,178.4 L364.3,178.6 L365.0,178.8 L365.8,179.0 L366.5,179.2 L367.2,179.4 L367.9,179.6 L368.6,179.8 L369.3,180.0 L370.0,180.2 L370.7,180.5 L371.4,180.7 L372.1,180.9 L372.8,181.1 L373.5,181.3 L374.2,181.5 L374.9,181.8 L375.6,182.0 L376.3,182.2 L377.0,182.4 L377.8,182.7 L378.5,182.9 L379.2,183.1 L379.9,183.4 L380.6,183.6 L381.3,183.8 L382.0,184.1 L382.7,184.3 L383.4,184.6 L384.1,184.8 L384.8,185.0 L385.5,185.3 L386.2,185.5 L386.9,185.8 L387.6,186.0 L388.3,186.3 L389.1,186.5 L389.8,186.8 L390.5,187.0 L391.2,187.3 L391.9,187.6 L392.6,187.8 L393.3,188.1 L394.0,188.3 L394.7,188.6 L395.4,188.9 L396.1,189.1 L396.8,189.4 L397.5,189.7 L398.2,189.9 L398.9,190.2 L399.6,190.5 L400.3,190.8 L401.1,191.0 L401.8,191.3 L402.5,191.6 L403.2,191.9 L403.9,192.2 L404.6,192.4 L405.3,192.7 L406.0,193.0 L406.7,193.3 L407.4,193.6 L408.1,193.9 L408.8,194.2 L409.5,194.5 L410.2,194.8 L410.9,195.0 L411.6,195.3 L412.3,195.6 L413.1,195.9 L413.8,196.2 L414.5,196.5 L415.2,196.8 L415.9,197.1 L416.6,197.5 L417.3,197.8 L418.0,198.1 L418.7,198.4 L419.4,198.7 L420.1,199.0 L420.8,199.3 L421.5,199.6 L422.2,199.9 L422.9,200.3 L423.6,200.6 L424.4,200.9 L425.1,201.2 L425.8,201.5 L426.5,201.9 L427.2,202.2 L427.9,202.5 L428.6,202.8 L429.3,203.2 L430.0,203.5 L430.7,203.8 L431.4,204.2 L432.1,204.5 L432.8,204.8 L433.5,205.2 L434.2,205.5 L434.9,205.8 L435.6,206.2 L436.4,206.5 L437.1,206.8 L437.8,207.2 L438.5,207.5 L439.2,207.9 L439.9,208.2 L440.6,208.6 L441.3,208.9 L442.0,209.3 L442.7,209.6 L443.4,210.0 L444.1,210.3 L444.8,210.7 L445.5,211.0 L446.2,211.4 L446.9,211.7 L447.7,212.1 L448.4,212.5 L449.1,212.8 L449.8,213.2 L450.5,213.5 L451.2,213.9 L451.9,214.3 L452.6,214.6 L453.3,215.0 L454.0,215.4 L454.7,215.7 L455.4,216.1 L456.1,216.5 L456.8,216.9 L457.5,217.2 L458.2,217.6 L458.9,218.0 L459.7,218.4 L460.4,218.7 L461.1,219.1 L461.8,219.5 L462.5,219.9 L463.2,220.2 L463.9,220.6 L464.6,221.0 L465.3,221.4 L466.0,221.8 L466.7,222.2 L467.4,222.6 L468.1,222.9 L468.8,223.3 L469.5,223.7 L470.2,224.1 L470.9,224.5 L471.7,224.9 L472.4,225.3 L473.1,225.7 L473.8,226.1 L474.5,226.5 L475.2,226.9 L475.9,227.3 L476.6,227.7 L477.3,228.1 L478.0,228.5 L478.7,228.9 L479.4,229.3 L480.1,229.7 L480.8,230.1 L481.5,230.5 L482.2,230.9 L483.0,231.3 L483.7,231.7 L484.4,232.1 L485.1,232.5 L485.8,233.0 L486.5,233.4 L487.2,233.8 L487.9,234.2 L488.6,234.6 L489.3,235.0 L490.0,235.4 L490.7,235.9 L491.4,236.3 L492.1,236.7 L492.8,237.1 L493.5,237.5 L494.2,238.0 L495.0,238.4 L495.7,238.8 L496.4,239.2 L497.1,239.7 L497.8,240.1 L498.5,240.5 L499.2,240.9 L499.9,241.4 L500.6,241.8 L501.3,242.2 L502.0,242.6 L502.7,243.1 L503.4,243.5 L504.1,243.9 L504.8,244.4 L505.5,244.8 L506.3,245.2 L507.0,245.7 L507.7,246.1 L508.4,246.6 L509.1,247.0 L509.8,247.4 L510.5,247.9 L511.2,248.3 L511.9,248.7 L512.6,249.2 L513.3,249.6 L514.0,250.1 L514.7,250.5 L515.4,251.0 L516.1,251.4 L516.8,251.8 L517.5,252.3 L518.3,252.7 L519.0,253.2 L519.7,253.6 L520.4,254.1 L521.1,254.5 L521.8,255.0 L522.5,255.4 L523.2,255.9 L523.9,256.3 L524.6,256.8 L525.3,257.2 L526.0,257.7 L526.7,258.1 L527.4,258.6 L528.1,259.0 L528.8,259.5 L529.5,260.0 L530.3,260.4 L531.0,260.9 L531.7,261.3 L532.4,261.8 L533.1,262.2 L533.8,262.7 L534.5,263.2 L535.2,263.6 L535.9,264.1 L536.6,264.5 L537.3,265.0 L538.0,265.5 L538.7,265.9 L539.4,266.4 L540.1,266.9 L540.8,267.3 L541.6,267.8 L542.3,268.2 L543.0,268.7 L543.7,269.2 L544.4,269.6 L545.1,270.1 L545.8,270.6 L546.5,271.0 L547.2,271.5 L547.9,272.0 L548.6,272.4 L549.3,272.9 L550.0,273.4 L550.7,273.9 L551.4,274.3 L552.1,274.8 L552.8,275.3 L553.6,275.7 L554.3,276.2 L555.0,276.7 L555.7,277.2 L556.4,277.6 L557.1,278.1 L557.8,278.6 L558.5,279.1 L559.2,279.5 L559.9,280.0" fill="none" stroke="#b81818" stroke-width="2.2" stroke-dasharray="2.5 3" stroke-dashoffset="-1.6"/>
<path d="M277.5 89L272.5 103L282.5 103Z" fill="#000"/>
<path d="M8 555h2M8 562l2 -1M8 564h2M8 577h1" stroke="#000" stroke-width="1"/>
</g>
<g font-family="Liberation Serif" font-size="15" fill="#000" stroke="none"><path d="M88.5 565.5H98.5" stroke="#000"/><text x="93.5" y="563.5" text-anchor="middle" font-size="18">&#960;</text><text x="93.5" y="578.5" text-anchor="middle" font-size="15.5">6</text><path d="M79.5 566H87.5" stroke="#000" stroke-width="1.3"/><path d="M132.5 565.5H142.5" stroke="#000"/><text x="137.5" y="563.5" text-anchor="middle" font-size="18">&#960;</text><text x="137.5" y="578.5" text-anchor="middle" font-size="15.5">8</text><path d="M123.5 566H131.5" stroke="#000" stroke-width="1.3"/><path d="M168.5 565.5H186.5" stroke="#000"/><text x="177.5" y="563.5" text-anchor="middle" font-size="18">&#960;</text><text x="177.5" y="578.5" text-anchor="middle" font-size="15.5">12</text><path d="M159.5 566H167.5" stroke="#000" stroke-width="1.3"/><path d="M212.5 565.5H230.5" stroke="#000"/><text x="221.5" y="563.5" text-anchor="middle" font-size="18">&#960;</text><text x="221.5" y="578.5" text-anchor="middle" font-size="15.5">24</text><path d="M203.5 566H211.5" stroke="#000" stroke-width="1.3"/><path d="M300.5 565.5H318.5" stroke="#000"/><text x="309.5" y="563.5" text-anchor="middle" font-size="18">&#960;</text><text x="309.5" y="578.5" text-anchor="middle" font-size="15.5">24</text><path d="M344.5 565.5H362.5" stroke="#000"/><text x="353.5" y="563.5" text-anchor="middle" font-size="18">&#960;</text><text x="353.5" y="578.5" text-anchor="middle" font-size="15.5">12</text><path d="M396.5 565.5H406.5" stroke="#000"/><text x="401.5" y="563.5" text-anchor="middle" font-size="18">&#960;</text><text x="401.5" y="578.5" text-anchor="middle" font-size="15.5">8</text><path d="M440.5 565.5H450.5" stroke="#000"/><text x="445.5" y="563.5" text-anchor="middle" font-size="18">&#960;</text><text x="445.5" y="578.5" text-anchor="middle" font-size="15.5">6</text><path d="M467.5 565.5H484.5" stroke="#000"/><text x="476" y="563" text-anchor="middle">5</text><text x="476" y="578.5" text-anchor="middle">24</text><text x="485" y="571" font-size="18">&#960;</text></g>
</svg>
<div id="tY" class="a" style="left:263.00px;top:90.00px;font-size:16px;white-space:nowrap;transform:scaleX(1.0000);transform-origin:0 0;font-family:'Liberation Serif',serif;font-weight:bold;font-style:italic">y</div>
<div id="t1" class="a" style="left:266.00px;top:169.00px;font-size:15px;white-space:nowrap;transform:scaleX(1.0000);transform-origin:0 0;font-family:'Liberation Serif',serif">1</div>
<div id="tv0" class="a" style="left:252.94px;top:246.00px;font-size:14px;white-space:nowrap;transform:scaleX(1.0556);transform-origin:0 0;color:#101010">0.8</div>
<div id="tv1" class="a" style="left:252.94px;top:323.00px;font-size:14px;white-space:nowrap;transform:scaleX(1.0556);transform-origin:0 0;color:#101010">0.6</div>
<div id="tv2" class="a" style="left:252.94px;top:400.00px;font-size:14px;white-space:nowrap;transform:scaleX(1.0556);transform-origin:0 0;color:#101010">0.4</div>
<div id="tv3" class="a" style="left:252.94px;top:477.00px;font-size:14px;white-space:nowrap;transform:scaleX(1.0556);transform-origin:0 0;color:#101010">0.2</div>
<svg class="a" style="left:262px;top:553px" width="14" height="14"><circle cx="6.9" cy="6.8" r="4.5" fill="none" stroke="#000" stroke-width="1.1"/></svg>
<div class="a" style="left:4px;top:576px;width:560px;height:19px;background:#c2c2c2;border-top:1px solid #a8a8a8"></div>
<div class="a" style="left:253px;top:577px;width:1px;height:18px;background:#fff"></div>
<div class="a" style="left:4px;top:595px;width:560px;height:1px;background:#fff"></div>
<div id="tSt1" class="a jb" style="left:9.09px;top:580.00px;font-size:12px;white-space:nowrap;transform:scaleX(0.9079);transform-origin:0 0;">( 0.634, 1.179)</div>
<div id="tSt2" class="a jb" style="left:257.03px;top:580.00px;font-size:12px;white-space:nowrap;transform:scaleX(0.9389);transform-origin:0 0;">&#8211;0.800 &lt; x &lt; &nbsp;0.800 , &#8211;0.200 &lt; y &lt; &nbsp;1.200</div>
<div class="a" style="left:527px;top:0;width:273px;height:600px;background:#0842d6;border-radius:7px 7px 0 0"></div>
<div class="a" style="left:527px;top:0;width:273px;height:29px;border-radius:7px 7px 0 0;background:linear-gradient(#0a46d0 0,#0a46d0 1px,#3d8efa 1px,#3a88f6 3px,#0866ea 6px,#0056de 10px,#0054dc 18px,#0062f2 21px,#0068f6 25px,#0048c8 28px)"></div>
<svg class="a" style="left:528px;top:-1px" width="30" height="30" viewBox="0 0 30 30">
<path d="M14 9.5L18.5 12L20.5 14.5L19 17.5L16.5 20.5L13 22.5L8.5 22.3L7 20.5L7 15.5L9 12.5Z" fill="#6a12a0" stroke="#1a0038" stroke-width="1.3" stroke-linejoin="round"/>
<path d="M17.5 11.5L20.5 9" stroke="#103828" stroke-width="1.4"/>
<g fill="#c468d8"><circle cx="15.5" cy="13.5" r="0.8"/><circle cx="11" cy="16" r="0.8"/><circle cx="14" cy="17" r="0.8"/><circle cx="9.5" cy="19" r="0.7"/><circle cx="12" cy="20.5" r="0.7"/><circle cx="17" cy="16.5" r="0.7"/></g></svg>
<div id="tDP" class="a" style="left:552.12px;top:8.00px;font-size:13px;white-space:nowrap;transform:scaleX(0.8831);transform-origin:0 0;font-weight:bold;color:#fff;text-shadow:1px 1px #0a1e80;-webkit-text-stroke:0.45px #fff">データパネル</div>
<div class="a" style="left:774px;top:6px;width:21px;height:21px;border:1px solid #fff;border-radius:3px;background:linear-gradient(135deg,#e8805c,#d84a22 50%,#c8401c)"><svg class="a" style="left:0;top:0" width="19" height="19"><path d="M5 5L14 14M14 5L5 14" stroke="#fff" stroke-width="2"/></svg></div>
<div class="a" style="left:531px;top:29px;width:266px;height:20px;background:#fff"></div>
<div class="a" style="left:760px;top:29px;width:37px;height:20px;background:#ece9d8"></div>
<div id="tM1" class="a jb" style="left:536.23px;top:31.00px;font-size:12px;white-space:nowrap;transform:scaleX(0.7742);transform-origin:0 0;">ファイル(<u>F</u>)</div>
<div id="tM2" class="a jb" style="left:600.00px;top:32.00px;font-size:12px;white-space:nowrap;transform:scaleX(0.9744);transform-origin:0 0;">編集(<u>E</u>)</div>
<div id="tM3" class="a jb" style="left:651.97px;top:32.00px;font-size:12px;white-space:nowrap;transform:scaleX(1.0269);transform-origin:0 0;">表示(<u>V</u>)</div>
<div id="tM4" class="a jb" style="left:706.14px;top:31.00px;font-size:12px;white-space:nowrap;transform:scaleX(0.8627);transform-origin:0 0;">ヘルプ(<u>H</u>)</div>
<div class="a" style="left:531px;top:49px;width:266px;height:39px;background:#c2c2c2;border-top:1px solid #a8a8a8"></div>
<svg class="a" style="left:527px;top:49px" width="273" height="40" viewBox="527 49 273 40">
<circle cx="546.5" cy="71" r="5.3" fill="#7c7c7c" stroke="#101010" stroke-width="1.2"/>
<circle cx="545" cy="69" r="1" fill="#d8d8d8"/>
<path d="M548 65.5Q549 63.5 551 64L552.5 65.5" fill="none" stroke="#101010" stroke-width="1.1"/>
<circle cx="555" cy="66" r="2" fill="#e8e8a0" opacity="0.8"/>
<path d="M567.5 67.5h4l1.5 1.5h6v8h-11.5z" fill="#f4f478" stroke="#202010" stroke-width="1"/>
<path d="M568 76.5l3-6h12.5l-3.5 6z" fill="#a0a028" stroke="#202010" stroke-width="1"/>
<path d="M576.5 63.5Q580 61 582 64" fill="none" stroke="#101010" stroke-width="1.1"/><path d="M580.5 64.5h3.5l-1.5 2.5z" fill="#101010"/>
<rect x="597.5" y="62.5" width="14.5" height="14.5" rx="1" fill="#404040" stroke="#101010" stroke-width="1.1"/>
<rect x="600" y="63" width="9.5" height="6.5" fill="#c8c8c8"/>
<rect x="599.5" y="72" width="10.5" height="5" fill="#000"/><rect x="606.5" y="73" width="2.5" height="3" fill="#e8e8e8"/>
<rect x="622" y="54" width="1" height="32" fill="#fff"/>
<path d="M633 70Q637 65 642 66Q646 68 645 71Q644 73 641 74" fill="none" stroke="#000" stroke-width="1.4"/>
<path d="M629.5 73L631 66.5L637 70Z" fill="#000"/>
<path d="M660 74Q660 67 666 67Q671 67 672 71M668 73.5h7.5V68" fill="none" stroke="#fff" stroke-width="1.4"/>
<path d="M661 75Q661 69 666 68.5M669 74.5h7" fill="none" stroke="#a0a0a0" stroke-width="0.8"/>
<rect x="684" y="54" width="1" height="32" fill="#fff"/>
<path d="M695.5 63.5h9l1.5 6h-12z" fill="#f8f8f8" stroke="#000" stroke-width="1.1"/>
<path d="M697 65.5h6.5M696.5 67.5h7" stroke="#000" stroke-width="0.9"/>
<rect x="691.5" y="69.5" width="18" height="7" rx="2.5" fill="#e0e0e0" stroke="#000" stroke-width="1.1"/>
<path d="M692 72.5h17" stroke="#000" stroke-width="1.2"/>
<rect x="720.5" y="64.5" width="17" height="12" rx="2.5" fill="#707070" stroke="#000" stroke-width="1.1"/>
<path d="M722 66h4" stroke="#000"/>
<circle cx="727.5" cy="71" r="3.2" fill="#f0f0f0" stroke="#303030" stroke-width="1.2"/>
<circle cx="733.5" cy="67" r="1" fill="#e0f060"/>
<path d="M746 69h5l-2.5 3z" fill="#000"/>
</svg>
<div class="a sep" style="top:87px"></div>
<div class="a pnl" style="top:91px;height:197px;background:#c8c8e8"></div>
<svg class="a" style="left:610px;top:89px" width="30" height="24" viewBox="610 89 30 24"><path d="M615.5 104.5Q617 98 620 97.5Q622.5 97.5 624.5 100.5Q626.5 103.5 628.5 103.5Q631 103.5 633.5 97" fill="none" stroke="#000090" stroke-width="1.2"/><path d="M624.5 91V110M615 100.5H634" stroke="#000060" stroke-width="1.1"/></svg>
<div class="a box" style="top:111px"></div>
<div class="a box" style="top:149px"></div>
<div class="a box" style="top:187px"></div>
<div class="a box" style="top:225px;border-bottom:1px solid #a0a0a0"></div>
<div class="a sep" style="top:288px"></div>
<div class="a pnl" style="top:292px;height:45px;background:#c8e6c8"></div>
<svg class="a" style="left:614px;top:291px" width="21" height="21" viewBox="0 0 21 21"><circle cx="10" cy="10.5" r="6.8" fill="none" stroke="#000090" stroke-width="1.2"/><path d="M10 1V20M1 10.5H20" stroke="#000090" stroke-width="1.1"/></svg>
<div class="a sep" style="top:337px"></div>
<div class="a pnl" style="top:341px;height:45px;background:#e8e6b8"></div>
<svg class="a" style="left:612px;top:340px" width="28" height="24" viewBox="612 340 28 24"><path d="M625 352.5H620.5L617.5 349.5V346L620 343H623M625 346V352.5M619.5 358.5L625 353L631.5 347.5" fill="none" stroke="#000070" stroke-width="1.2"/><circle cx="624" cy="345" r="1.7" fill="#0000d0"/></svg>
<div class="a sep" style="top:386px"></div>
<div class="a pnl" style="top:390px;height:45px;background:#ecdcb2"></div>
<svg class="a" style="left:612px;top:388px" width="28" height="24" viewBox="612 388 28 24"><circle cx="620" cy="396" r="1.7" fill="#0000c8"/><circle cx="628" cy="403" r="4.4" fill="#c8c8f8" stroke="#000078" stroke-width="1.2"/><circle cx="628" cy="403" r="1.1" fill="#000078"/></svg>
<div class="a sep" style="top:435px"></div>
<div class="a pnl" style="top:439px;height:58px;background:#f0c8c8"></div>
<div class="a sep" style="top:497px"></div>
<div class="a pnl" style="top:501px;height:45px;background:#e2d0e0"></div>
<div class="a sep" style="top:546px"></div>
<div class="a pnl" style="top:550px;height:24px;background:#e0e0dc"></div>
<svg class="a" style="left:535px;top:548px" width="25" height="24" viewBox="535 548 25 24"><rect x="539.5" y="554.5" width="14" height="15.5" fill="#fff" stroke="#000" stroke-width="1.3"/><path d="M541.5 558.5h4M549 558.5h2.5M541.5 561.5h3M549 561.5h2.5M541.5 564.5h3" stroke="#808080" stroke-width="1"/><path d="M549.5 551L552.2 552.3L547 561.5L544.5 560.2Z" fill="#fff" stroke="#0000a0" stroke-width="1.1"/><path d="M547 561.5L544.5 560.2L544.8 564.5Z" fill="#0000c0" stroke="#0000c0" stroke-width="0.8"/></svg>
<svg class="a" style="left:617px;top:551px" width="16" height="18" viewBox="0 0 16 18"><rect x="1.5" y="1.5" width="12" height="15" fill="#f8f8ff" stroke="#000080" stroke-width="1.3"/><path d="M3.5 5h8M3.5 8h8M3.5 11h8M3.5 14h8" stroke="#303050" stroke-width="1.1"/></svg>
<div class="a" style="left:531px;top:574px;width:266px;height:1px;background:#a0a0a0"></div>
<div class="a" style="left:531px;top:575px;width:266px;height:3px;background:#c8c8c8"></div>
<div class="a" style="left:531px;top:578px;width:266px;height:17px;background:#f4f3ea"></div>
<div class="a" style="left:531px;top:578px;width:16px;height:17px;background:#ece9d8;border-right:1px solid #c0c0b8"></div>
<svg class="a" style="left:535px;top:582px" width="8" height="10"><path d="M6 1L2 5L6 9Z" fill="#000"/></svg>
<div class="a" style="left:548px;top:578px;width:61px;height:17px;background:#ece9d8;border-right:2px solid #a8a8a0;border-bottom:1px solid #a8a8a0"></div>
<div class="a" style="left:781px;top:578px;width:16px;height:17px;background:#ece9d8;border-left:1px solid #fff;border-bottom:1px solid #a8a8a0"></div>
<svg class="a" style="left:785px;top:582px" width="8" height="10"><path d="M2 1L6 5L2 9Z" fill="#000"/></svg>

<div class="a" style="left:531px;top:91px;width:2px;height:483px;background:linear-gradient(90deg,#fff 0,#fff 1px,#f0f0f0 1px)"></div>
<div class="a" style="left:527px;top:27px;width:4px;height:573px;background:linear-gradient(90deg,#0030b8 0,#0030b8 1px,#1a5ef0 1px,#1a5ef0 3px,#0838c8 3px)"></div>
<div id="f1c" class="a" style="left:579.08px;top:123.00px;font-size:16px;white-space:nowrap;transform:scaleX(0.9167);transform-origin:0 0;font-family:'Liberation Serif',serif;letter-spacing:2px">cos</div>
<div id="f1x" class="a" style="left:604.00px;top:122.00px;font-size:17px;white-space:nowrap;transform:scaleX(1.2500);transform-origin:0 0;font-family:'Liberation Serif',serif;font-weight:bold;font-style:italic">x</div>
<div id="f2e" class="a" style="left:578.00px;top:161.00px;font-size:16px;white-space:nowrap;transform:scaleX(0.8571);transform-origin:0 0;font-family:'Liberation Serif',serif;font-weight:bold;font-style:italic">e</div>
<div class="a" style="left:590px;top:165px;width:6px;height:1px;background:#000"></div>
<div class="a" style="left:600px;top:165px;width:14px;height:1px;background:#000"></div>
<div id="f2x" class="a" style="left:600.00px;top:155.00px;font-size:10px;white-space:nowrap;transform:scaleX(1.2000);transform-origin:0 0;font-family:'Liberation Serif',serif;font-weight:bold;font-style:italic">x</div>
<div id="f2s" class="a" style="left:605.50px;top:152.00px;font-size:7px;white-space:nowrap;transform:scaleX(1.5000);transform-origin:0 0;font-family:'Liberation Serif',serif;">2</div>
<div id="f2d" class="a" style="left:602.75px;top:163.00px;font-size:11px;white-space:nowrap;transform:scaleX(1.2500);transform-origin:0 0;font-family:'Liberation Serif',serif;">2</div>
<div id="f3p" class="a" style="left:578.50px;top:201.00px;font-size:15px;white-space:nowrap;transform:scaleX(1.0000);transform-origin:0 0;font-family:'Liberation Serif',serif;">(</div>
<div id="f3c" class="a" style="left:587.04px;top:199.00px;font-size:16px;white-space:nowrap;transform:scaleX(0.9583);transform-origin:0 0;font-family:'Liberation Serif',serif;letter-spacing:2px">cos</div>
<div id="f3x" class="a" style="left:612.00px;top:198.00px;font-size:17px;white-space:nowrap;transform:scaleX(1.1250);transform-origin:0 0;font-family:'Liberation Serif',serif;font-weight:bold;font-style:italic">x</div>
<div id="f3q" class="a" style="left:622.29px;top:201.00px;font-size:15px;white-space:nowrap;transform:scaleX(1.0000);transform-origin:0 0;font-family:'Liberation Serif',serif;">)</div>
<div id="f3n" class="a" style="left:629.71px;top:198.00px;font-size:11px;white-space:nowrap;transform:scaleX(1.1429);transform-origin:0 0;font-family:'Liberation Serif',serif;">100</div>
<div id="f4p" class="a" style="left:578.29px;top:225.00px;font-size:25px;white-space:nowrap;transform:scaleX(1.0000);transform-origin:0 0;font-family:'Liberation Serif',serif;">(</div>
<div id="f4e" class="a" style="left:586.00px;top:237.00px;font-size:16px;white-space:nowrap;transform:scaleX(1.0000);transform-origin:0 0;font-family:'Liberation Serif',serif;font-weight:bold;font-style:italic">e</div>
<div class="a" style="left:598px;top:241px;width:6px;height:1px;background:#000"></div>
<div class="a" style="left:608px;top:241px;width:14px;height:1px;background:#000"></div>
<div id="f4x" class="a" style="left:608.00px;top:231.00px;font-size:10px;white-space:nowrap;transform:scaleX(1.8225);transform-origin:0 0;font-family:'Liberation Serif',serif;font-weight:bold;font-style:italic">x</div>
<div id="f4s" class="a" style="left:614.50px;top:230.00px;font-size:7px;white-space:nowrap;transform:scaleX(1.5000);transform-origin:0 0;font-family:'Liberation Serif',serif;">2</div>
<div id="f4d" class="a" style="left:610.50px;top:240.00px;font-size:11px;white-space:nowrap;transform:scaleX(1.5000);transform-origin:0 0;font-family:'Liberation Serif',serif;">2</div>
<div id="f4q" class="a" style="left:623.26px;top:225.00px;font-size:25px;white-space:nowrap;transform:scaleX(1.0000);transform-origin:0 0;font-family:'Liberation Serif',serif;">)</div>
<div id="f4n" class="a" style="left:632.00px;top:235.00px;font-size:12px;white-space:nowrap;transform:scaleX(1.0000);transform-origin:0 0;font-family:'Liberation Serif',serif;">100</div>
<div id="ia" class="a" style="left:618.00px;top:436.00px;font-size:14px;white-space:nowrap;transform:scaleX(1.0000);transform-origin:0 0;font-family:'Liberation Serif',serif;font-style:italic;color:#0000d0;-webkit-text-stroke:0.5px #0000d0">a</div>
<div id="ib" class="a" style="left:624.00px;top:443.00px;font-size:14px;white-space:nowrap;transform:scaleX(1.0000);transform-origin:0 0;font-family:'Liberation Serif',serif;font-style:italic;color:#0000d0;-webkit-text-stroke:0.5px #0000d0">b</div>
<div id="ifx" class="a" style="left:617.00px;top:502.00px;font-size:16px;white-space:nowrap;transform:scaleX(1.0000);transform-origin:0 0;font-family:'Liberation Serif',serif;font-style:italic;color:#0000c0;-webkit-text-stroke:0.3px #0000c0">f</div>
<div id="ifx2" class="a" style="left:625.00px;top:506.00px;font-size:14px;white-space:nowrap;transform:scaleX(1.0000);transform-origin:0 0;font-family:'Liberation Serif',serif;font-style:italic;color:#0000c0;-webkit-text-stroke:0.4px #0000c0">x</div>
<div id="hP1" class="a jb" style="left:638.91px;top:92.00px;font-size:14px;white-space:nowrap;transform:scaleX(1.0756);transform-origin:0 0;">陽関数</div>
<div id="hP2" class="a jb" style="left:638.91px;top:293.00px;font-size:14px;white-space:nowrap;transform:scaleX(1.0756);transform-origin:0 0;">陰関数</div>
<div id="hP3" class="a jb" style="left:638.92px;top:342.00px;font-size:14px;white-space:nowrap;transform:scaleX(1.0769);transform-origin:0 0;">曲線</div>
<div id="hP4" class="a jb" style="left:638.94px;top:393.00px;font-size:14px;white-space:nowrap;transform:scaleX(1.0556);transform-origin:0 0;">基本図形</div>
<div id="hP5" class="a jb" style="left:640.10px;top:440.00px;font-size:14px;white-space:nowrap;transform:scaleX(0.8964);transform-origin:0 0;">パラメータ</div>
<div id="hP6" class="a jb" style="left:640.93px;top:504.00px;font-size:14px;white-space:nowrap;transform:scaleX(1.0744);transform-origin:0 0;">関数定義</div>
<div id="hP7" class="a jb" style="left:562.00px;top:553.00px;font-size:14px;white-space:nowrap;transform:scaleX(0.8919);transform-origin:0 0;">編集</div>
<div id="hP8" class="a jb" style="left:638.27px;top:551.00px;font-size:14px;white-space:nowrap;transform:scaleX(0.8470);transform-origin:0 0;">メモ</div>
<div id="c1" class="a jb" style="left:562.00px;top:270.00px;font-size:12px;white-space:nowrap;transform:scaleX(1.0000);transform-origin:0 0;">作成(<u>D</u>)</div>
<div id="c2" class="a jb" style="left:562.00px;top:318.00px;font-size:12px;white-space:nowrap;transform:scaleX(1.0000);transform-origin:0 0;">作成(<u>R</u>)</div>
<div id="c3" class="a jb" style="left:562.00px;top:366.00px;font-size:12px;white-space:nowrap;transform:scaleX(1.0000);transform-origin:0 0;">作成</div>
<div id="c4" class="a jb" style="left:562.00px;top:415.00px;font-size:12px;white-space:nowrap;transform:scaleX(1.0000);transform-origin:0 0;">作成</div>
<div id="c5" class="a jb" style="left:562.00px;top:527.00px;font-size:12px;white-space:nowrap;transform:scaleX(1.0000);transform-origin:0 0;">作成</div>
<svg class="a" style="left:536px;top:264px" width="24" height="24" viewBox="536 264 24 24"><path d="M546.7 268.3L549.3 269.7L544.8 278.1L542.1 276.7Z" fill="#fff" stroke="#0000b0" stroke-width="1.1"/><path d="M544.8 278.1L542.1 276.7L541 282.5Z" fill="#0000b0" stroke="#0000b0" stroke-width="0.8"/><path d="M540.5 283.2Q545 283.8 548.3 282.6A2.6 2.6 0 1 1 551.3 283.2Q553.5 283.8 556.5 282.8" fill="none" stroke="#e00000" stroke-width="1.5"/></svg>
<svg class="a" style="left:536px;top:312px" width="24" height="24" viewBox="536 264 24 24"><path d="M546.7 268.3L549.3 269.7L544.8 278.1L542.1 276.7Z" fill="#fff" stroke="#0000b0" stroke-width="1.1"/><path d="M544.8 278.1L542.1 276.7L541 282.5Z" fill="#0000b0" stroke="#0000b0" stroke-width="0.8"/><path d="M540.5 283.2Q545 283.8 548.3 282.6A2.6 2.6 0 1 1 551.3 283.2Q553.5 283.8 556.5 282.8" fill="none" stroke="#e00000" stroke-width="1.5"/></svg>
<svg class="a" style="left:536px;top:360px" width="24" height="24" viewBox="536 264 24 24"><path d="M546.7 268.3L549.3 269.7L544.8 278.1L542.1 276.7Z" fill="#fff" stroke="#0000b0" stroke-width="1.1"/><path d="M544.8 278.1L542.1 276.7L541 282.5Z" fill="#0000b0" stroke="#0000b0" stroke-width="0.8"/><path d="M540.5 283.2Q545 283.8 548.3 282.6A2.6 2.6 0 1 1 551.3 283.2Q553.5 283.8 556.5 282.8" fill="none" stroke="#e00000" stroke-width="1.5"/></svg>
<svg class="a" style="left:536px;top:409px" width="24" height="24" viewBox="536 264 24 24"><path d="M546.7 268.3L549.3 269.7L544.8 278.1L542.1 276.7Z" fill="#fff" stroke="#0000b0" stroke-width="1.1"/><path d="M544.8 278.1L542.1 276.7L541 282.5Z" fill="#0000b0" stroke="#0000b0" stroke-width="0.8"/><path d="M540.5 283.2Q545 283.8 548.3 282.6A2.6 2.6 0 1 1 551.3 283.2Q553.5 283.8 556.5 282.8" fill="none" stroke="#e00000" stroke-width="1.5"/></svg>
<svg class="a" style="left:536px;top:521px" width="24" height="24" viewBox="536 264 24 24"><path d="M546.7 268.3L549.3 269.7L544.8 278.1L542.1 276.7Z" fill="#fff" stroke="#0000b0" stroke-width="1.1"/><path d="M544.8 278.1L542.1 276.7L541 282.5Z" fill="#0000b0" stroke="#0000b0" stroke-width="0.8"/><path d="M540.5 283.2Q545 283.8 548.3 282.6A2.6 2.6 0 1 1 551.3 283.2Q553.5 283.8 556.5 282.8" fill="none" stroke="#e00000" stroke-width="1.5"/></svg>
<div id="lY1" class="a" style="left:543.05px;top:122.00px;font-size:15px;white-space:nowrap;transform:scaleX(1.0885);transform-origin:0 0;font-family:'Liberation Serif',serif;font-weight:bold;font-style:italic;color:#1010d0">y1=</div>
<div id="lY2" class="a" style="left:543.05px;top:160.00px;font-size:15px;white-space:nowrap;transform:scaleX(1.0885);transform-origin:0 0;font-family:'Liberation Serif',serif;font-weight:bold;font-style:italic;color:#e01010">y2=</div>
<div id="lY3" class="a" style="left:543.05px;top:198.00px;font-size:15px;white-space:nowrap;transform:scaleX(1.0885);transform-origin:0 0;font-family:'Liberation Serif',serif;font-weight:bold;font-style:italic;color:#1010d0">y3=</div>
<div id="lY4" class="a" style="left:543.05px;top:236.00px;font-size:15px;white-space:nowrap;transform:scaleX(1.0885);transform-origin:0 0;font-family:'Liberation Serif',serif;font-weight:bold;font-style:italic;color:#e01010">y4=</div>
<div id="PQR" class="a" style="left:605.21px;top:413.00px;font-size:18px;white-space:nowrap;transform:scaleX(1.0314);transform-origin:0 0;font-family:'Liberation Serif',serif;font-weight:bold;letter-spacing:1px">P Q R S T U V A B C</div>
<div class="a sf" style="left:791px;top:411px;font-size:18px;font-weight:bold">D</div>
<div class="a" style="left:797px;top:29px;width:3px;height:571px;background:#0842d6"></div>
<svg class="a" style="left:693px;top:481px" width="9" height="8" viewBox="0 0 9 8"><g fill="#000"><circle cx="1.2" cy="2" r="1.1"/><circle cx="4.5" cy="1.1" r="1.1"/><circle cx="7.8" cy="2" r="1.1"/><ellipse cx="4.5" cy="5.4" rx="2.4" ry="2"/></g></svg><svg class="a" style="left:702px;top:476px" width="9" height="8" viewBox="0 0 9 8"><g fill="#000"><circle cx="1.2" cy="2" r="1.1"/><circle cx="4.5" cy="1.1" r="1.1"/><circle cx="7.8" cy="2" r="1.1"/><ellipse cx="4.5" cy="5.4" rx="2.4" ry="2"/></g></svg><svg class="a" style="left:724px;top:484px" width="9" height="8" viewBox="0 0 9 8"><g fill="#8a8a8a"><circle cx="1.2" cy="2" r="1.1"/><circle cx="4.5" cy="1.1" r="1.1"/><circle cx="7.8" cy="2" r="1.1"/><ellipse cx="4.5" cy="5.4" rx="2.4" ry="2"/></g></svg><svg class="a" style="left:733px;top:478px" width="9" height="8" viewBox="0 0 9 8"><g fill="#8a8a8a"><circle cx="1.2" cy="2" r="1.1"/><circle cx="4.5" cy="1.1" r="1.1"/><circle cx="7.8" cy="2" r="1.1"/><ellipse cx="4.5" cy="5.4" rx="2.4" ry="2"/></g></svg><svg class="a" style="left:753px;top:484px" width="9" height="8" viewBox="0 0 9 8"><g fill="#000"><circle cx="1.2" cy="2" r="1.1"/><circle cx="4.5" cy="1.1" r="1.1"/><circle cx="7.8" cy="2" r="1.1"/><ellipse cx="4.5" cy="5.4" rx="2.4" ry="2"/></g></svg><svg class="a" style="left:762px;top:478px" width="9" height="8" viewBox="0 0 9 8"><g fill="#000"><circle cx="1.2" cy="2" r="1.1"/><circle cx="4.5" cy="1.1" r="1.1"/><circle cx="7.8" cy="2" r="1.1"/><ellipse cx="4.5" cy="5.4" rx="2.4" ry="2"/></g></svg>
<svg class="a" style="left:720px;top:473px" width="13" height="9"><rect x="1" y="1" width="11" height="7" rx="2" fill="#c0c0c0" stroke="#000" stroke-width="1.4"/><circle cx="5.5" cy="4.5" r="1.7" fill="#fff" stroke="#000" stroke-width="0.9"/></svg>
<svg class="a" style="left:750px;top:470px" width="14" height="13"><circle cx="5" cy="7.5" r="4.3" fill="#707880" stroke="#000" stroke-width="1"/><path d="M7 3.5Q8 1 10 2L11 4" fill="none" stroke="#000"/><circle cx="12" cy="5" r="1.5" fill="#f0d890"/></svg>
<svg class="a" style="left:538px;top:0" width="1" height="1"></svg>
</body></html>
